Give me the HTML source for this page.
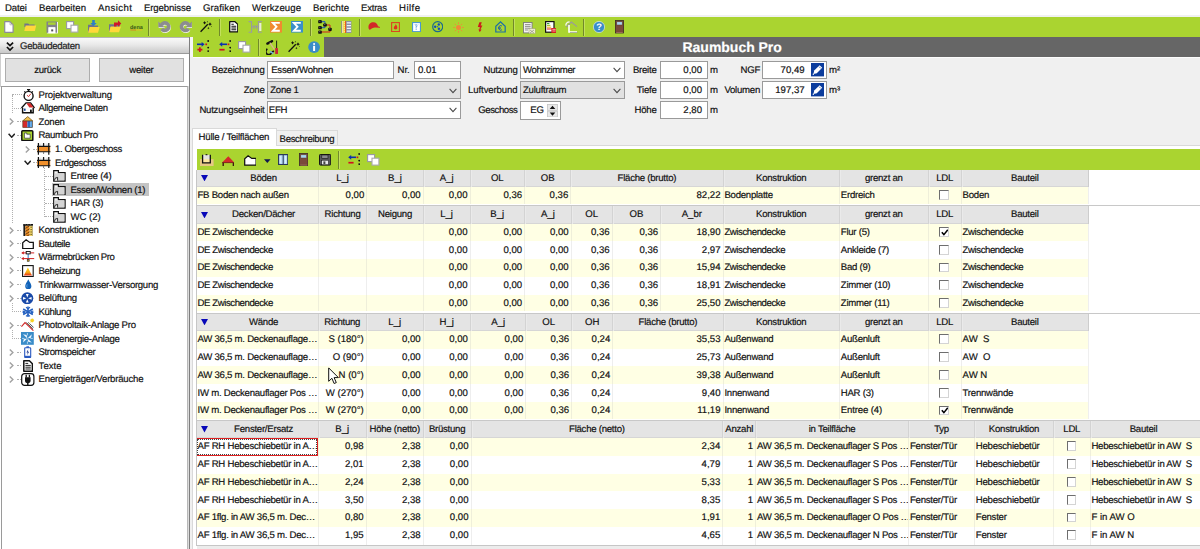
<!DOCTYPE html>
<html lang="de"><head><meta charset="utf-8"><title>Raumbuch Pro</title>
<style>
html,body{margin:0;padding:0}
body{width:1200px;height:549px;overflow:hidden;position:relative;background:#f0f0f0;font-family:"Liberation Sans",sans-serif;font-size:9.6px;color:#111;text-rendering:geometricPrecision}
div,svg{position:absolute;display:block}
.t{white-space:pre;overflow:visible;-webkit-text-stroke-width:0.18px}
</style></head>
<body>
<div style="left:0px;top:0px;width:1200px;height:17px;background:#fff"></div>
<div style="left:0px;top:15.4px;width:1200px;height:1.5px;background:#f1f1f1"></div>
<div class="t" style="left:5px;top:0.8px;height:15.4px;line-height:15.4px;text-align:left;letter-spacing:-0.102px;">Datei</div>
<div class="t" style="left:39px;top:0.8px;height:15.4px;line-height:15.4px;text-align:left;letter-spacing:0.066px;">Bearbeiten</div>
<div class="t" style="left:98px;top:0.8px;height:15.4px;line-height:15.4px;text-align:left;letter-spacing:0.422px;">Ansicht</div>
<div class="t" style="left:144px;top:0.8px;height:15.4px;line-height:15.4px;text-align:left;letter-spacing:-0.111px;">Ergebnisse</div>
<div class="t" style="left:203px;top:0.8px;height:15.4px;line-height:15.4px;text-align:left;letter-spacing:0.105px;">Grafiken</div>
<div class="t" style="left:252px;top:0.8px;height:15.4px;line-height:15.4px;text-align:left;letter-spacing:0.080px;">Werkzeuge</div>
<div class="t" style="left:313px;top:0.8px;height:15.4px;line-height:15.4px;text-align:left;letter-spacing:0.114px;">Berichte</div>
<div class="t" style="left:361px;top:0.8px;height:15.4px;line-height:15.4px;text-align:left;letter-spacing:-0.241px;">Extras</div>
<div class="t" style="left:399px;top:0.8px;height:15.4px;line-height:15.4px;text-align:left;letter-spacing:0.449px;">Hilfe</div>
<div style="left:0px;top:17px;width:1200px;height:20.2px;background:#aad430"></div>
<svg style="left:4px;top:21.2px" width="9.8" height="12" viewBox="0 0 9.8 12"><path d="M0.7 0.7 H6 L9.1 3.8 V11.3 H0.7 Z" fill="#fff" stroke="#8c8c96" stroke-width="1.2" stroke-linejoin="round"/><path d="M6 0.7 V3.8 H9.1" fill="none" stroke="#b0b0b8" stroke-width="0.8"/></svg>
<svg style="left:24.2px;top:22.8px" width="12.4" height="8.6" viewBox="0 0 12.4 8.6"><path d="M0.4 0.4 H4.2 L5.2 1.4 H10.6 V4 H0.4 Z" fill="#70748c"/><path d="M1.6 2.6 H12.2 L10.8 8.3 H0.2 Z" fill="#ffd83a"/></svg>
<svg style="left:46px;top:21.2px" width="12.4" height="12.6" viewBox="0 0 12.4 12.6"><rect x="1" y="1" width="11" height="11.4" fill="#f4f4f4"/><path d="M0.5 0.5 H11 V11.8 H9.4 V6.2 H2.4 V11.8 H0.5 Z" fill="#82828a"/><rect x="2" y="1.4" width="7.6" height="2.4" fill="#aad430"/><rect x="2.6" y="6.4" width="6.6" height="5.6" fill="#fff"/><rect x="5.2" y="8.4" width="2" height="2" fill="#555"/><path d="M2.4 11.9 H9.4" stroke="#fff" stroke-width="0.8"/></svg>
<svg style="left:66px;top:21.2px" width="12.5" height="11.8" viewBox="0 0 12.5 11.8"><rect x="0.6" y="0.6" width="7" height="7" fill="#fff" stroke="#9898a4" stroke-width="1.1"/><rect x="5" y="4.2" width="6.9" height="6.9" fill="#fff" stroke="#a8a8ac" stroke-width="1.1"/></svg>
<svg style="left:88px;top:20px" width="12.2" height="13" viewBox="0 0 12.2 13"><path d="M0 4.7 H4.4 L5.2 5.4 H10 V7.4 H1.2 V12.7 H0 Z" fill="#70748c"/><path d="M1.7 7 H11.7 L10 12.7 H0 Z" fill="#ffd83a"/><path d="M4.2 0 H6.8 V3 H8.7 L5.5 6.3 L2.3 3 H4.2 Z" fill="#2d7fc8"/></svg>
<svg style="left:109px;top:20.4px" width="12.6" height="12.6" viewBox="0 0 12.6 12.6"><path d="M0 4.3 H4.4 L5.2 5 H11 V7 H1.2 V12.3 H0 Z" fill="#70748c"/><path d="M1.7 6.6 H12 L10 12.3 H0 Z" fill="#ffd83a"/><path d="M5 6.6 V2.6 H9 V0.3 L12.3 3.6 L9 6.8 V5.1 H7.5 V6.6 Z" fill="#d01828"/></svg>
<svg style="left:129.6px;top:24px" width="13.4" height="7.4" viewBox="0 0 13.4 7.4"><text x="0" y="5" font-family="Liberation Sans" font-weight="bold" font-size="5.6" fill="#3a5a18" textLength="12.8" lengthAdjust="spacingAndGlyphs">dena</text><path d="M0.4 6 H6" stroke="#e07820" stroke-width="0.9"/><path d="M6 6 H12.4" stroke="#e0c020" stroke-width="0.9"/></svg>
<div style="left:148.1px;top:19px;width:1.1px;height:17px;background:#71892a"></div>
<div style="left:149.2px;top:19px;width:1px;height:17px;background:#c3e05c"></div>
<svg style="left:157.6px;top:21px" width="13.4" height="13" viewBox="0 0 13.4 13"><g transform="translate(0.4 0.7)"><path d="M3.4 4.2 A3.8 3.8 0 1 1 3.8 7.9" fill="none" stroke="#f6f6f6" stroke-width="3.7"/><path d="M0.3 0.5 V6.3 H6.6 Z" fill="#f6f6f6"/></g><path d="M3.4 4.2 A3.8 3.8 0 1 1 3.8 7.9" fill="none" stroke="#8c8c90" stroke-width="3.7"/><path d="M0.3 0.5 V6.3 H6.6 Z" fill="#8c8c90"/></svg>
<svg style="left:178.8px;top:21px" width="13.4" height="13" viewBox="0 0 13.4 13"><g transform="translate(13.2 0) scale(-1 1)"><g transform="translate(-0.4 0.7)"><path d="M3.4 4.2 A3.8 3.8 0 1 1 3.8 7.9" fill="none" stroke="#f6f6f6" stroke-width="3.7"/><path d="M0.3 0.5 V6.3 H6.6 Z" fill="#f6f6f6"/></g><path d="M3.4 4.2 A3.8 3.8 0 1 1 3.8 7.9" fill="none" stroke="#8c8c90" stroke-width="3.7"/><path d="M0.3 0.5 V6.3 H6.6 Z" fill="#8c8c90"/></g></svg>
<svg style="left:200px;top:21px" width="12" height="11.6" viewBox="0 0 12 11.6"><path d="M0.6 10.8 L7.8 3.2" stroke="#111" stroke-width="1.25" fill="none"/><path d="M4.6 0.10000000000000009 L5.194999999999999 1.205 L6.3 1.8 L5.194999999999999 2.395 L4.6 3.5 L4.005 2.395 L2.8999999999999995 1.8 L4.005 1.205 Z" fill="#111"/><path d="M10 1.3000000000000003 L10.665 2.535 L11.9 3.2 L10.665 3.865 L10 5.1 L9.335 3.865 L8.1 3.2 L9.335 2.535 Z" fill="#111"/><path d="M8.4 6.1 L8.785 6.815 L9.5 7.2 L8.785 7.585 L8.4 8.3 L8.015 7.585 L7.300000000000001 7.2 L8.015 6.815 Z" fill="#111"/><circle cx="7.4" cy="0.8" r="0.5" fill="#111"/><circle cx="11.4" cy="5.6" r="0.45" fill="#111"/></svg>
<div style="left:218.7px;top:19px;width:1.1px;height:17px;background:#71892a"></div>
<div style="left:219.8px;top:19px;width:1px;height:17px;background:#c3e05c"></div>
<svg style="left:228.6px;top:21.2px" width="9.6" height="11.6" viewBox="0 0 9.6 11.6"><path d="M0.7 0.7 H6 L8.8 3.4 V10.8 H0.7 Z" fill="#fff" stroke="#111" stroke-width="1.3" stroke-linejoin="round"/><path d="M2.4 3.2 H4.8 M2.4 5.2 H7.2 M2.4 7 H7.2 M2.4 8.8 H7.2" stroke="#111" stroke-width="1.05"/></svg>
<svg style="left:248px;top:21.4px" width="14.4" height="11.8" viewBox="0 0 14.4 11.8"><path d="M0.6 0.6 H3.6 V11.2 H0.6 M13.8 0.6 H10.4 V11.2 H13.8" fill="none" stroke="#9a9aa2" stroke-width="1.1"/><path d="M3.6 5.8 H10.4 M6 4 V7.8 M8.4 4 V7.8" stroke="#9a9aa2" stroke-width="1"/><rect x="11.2" y="2" width="2.2" height="8" fill="#e8ecd8"/></svg>
<svg style="left:270.2px;top:21.2px" width="12" height="11.6" viewBox="0 0 12 11.6"><rect width="12" height="11.6" fill="#f08a30"/><path d="M9.8 1.9 H2.9 L6.5 5.8 L2.9 9.7 H9.8" fill="none" stroke="#fff" stroke-width="1.9" stroke-linejoin="miter"/></svg>
<svg style="left:291.2px;top:21.2px" width="12" height="11.6" viewBox="0 0 12 11.6"><rect width="12" height="11.6" fill="#3a90c8"/><path d="M9.8 1.9 H2.9 L6.5 5.8 L2.9 9.7 H9.8" fill="none" stroke="#fff" stroke-width="1.9" stroke-linejoin="miter"/></svg>
<div style="left:309.9px;top:19px;width:1.1px;height:17px;background:#71892a"></div>
<div style="left:311px;top:19px;width:1px;height:17px;background:#c3e05c"></div>
<svg style="left:318px;top:20px" width="14.4" height="14.2" viewBox="0 0 14.4 14.2"><path d="M2 1.7 H7 V5 M2 7.7 H7 V5" fill="none" stroke="#1a50c0" stroke-width="1"/><path d="M7 5 H12 V9.3 M2 12 H12 V9.3" fill="none" stroke="#d02020" stroke-width="1"/><rect x="0.19999999999999996" y="0.09999999999999987" width="3.6" height="3.2" rx="0.9" fill="#111"/><rect x="1.1" y="0.7999999999999999" width="1.2" height="0.8" fill="#777"/><rect x="0.19999999999999996" y="6.1" width="3.6" height="3.2" rx="0.9" fill="#111"/><rect x="1.1" y="6.8" width="1.2" height="0.8" fill="#777"/><rect x="0.19999999999999996" y="10.6" width="3.6" height="3.2" rx="0.9" fill="#111"/><rect x="1.1" y="11.299999999999999" width="1.2" height="0.8" fill="#777"/><rect x="5.2" y="3.4" width="3.6" height="3.2" rx="0.9" fill="#111"/><rect x="6.1" y="4.1" width="1.2" height="0.8" fill="#777"/><rect x="10.2" y="7.700000000000001" width="3.6" height="3.2" rx="0.9" fill="#111"/><rect x="11.1" y="8.4" width="1.2" height="0.8" fill="#777"/></svg>
<svg style="left:341px;top:21px" width="10.6" height="12" viewBox="0 0 10.6 12"><rect x="0.2" y="0" width="0.9" height="12" fill="#8a8a90"/><rect x="1.1" y="0" width="1.5" height="12" fill="#f4e6a8"/><rect x="2.6" y="0" width="1.5" height="12" fill="#ffd030"/><rect x="4.1" y="0" width="1.1" height="12" fill="#e85020"/><rect x="5.2" y="0" width="5.2" height="12" fill="#8c90a8"/><path d="M5.8 1.8 H10 M5.8 4.6 H10 M5.8 7.4 H10 M5.8 10.2 H10" stroke="#f4f4fa" stroke-width="1.2"/><path d="M3.3 0 V12" stroke="#fff" stroke-width="0.5" stroke-dasharray="1 1"/></svg>
<div style="left:358.7px;top:19px;width:1.1px;height:17px;background:#71892a"></div>
<div style="left:359.8px;top:19px;width:1px;height:17px;background:#c3e05c"></div>
<svg style="left:367.8px;top:22.4px" width="12.4" height="8.2" viewBox="0 0 12.4 8.2"><path d="M0.6 6.4 C-0.2 2.6 2.4 0.2 5.4 0.3 C8 0.4 9.6 2.2 10 4.2 L12.3 5 L12 5.7 L7 5.5 C5.2 5.6 3.2 6.8 1.8 8 Z" fill="#d22828"/></svg>
<svg style="left:390.8px;top:22px" width="9" height="10.2" viewBox="0 0 9 10.2"><rect x="0.6" y="0.6" width="7.8" height="9" fill="none" stroke="#dc4420" stroke-width="1.1"/><path d="M4.6 2 C6.2 3.8 6.6 5.2 6.2 6.6 C5.8 7.8 3.2 7.8 2.8 6.6 C2.5 5.4 3.4 4.8 3.6 3.8 C4.2 4.4 4.4 3 4.6 2 Z" fill="#e03020"/></svg>
<svg style="left:411.8px;top:22px" width="9" height="10.2" viewBox="0 0 9 10.2"><rect x="0.55" y="0.55" width="7.9" height="9.1" fill="#fff" stroke="#4a98d0" stroke-width="1.1"/><path d="M4.2 2 V8.4 M4.2 5.2 L6 2.6 M3 2.4 L4.2 4" stroke="#5a9ad8" stroke-width="0.8" fill="none" stroke-dasharray="1.6 0.6"/></svg>
<svg style="left:432px;top:21.3px" width="11.4" height="11.4" viewBox="0 0 11.4 11.4"><circle cx="5.7" cy="5.7" r="5" fill="none" stroke="#1a6c8c" stroke-width="1.2"/><circle cx="6.8" cy="3.5" r="1.2" fill="#1048c0"/><circle cx="3.2" cy="5.8" r="1.2" fill="#1048c0"/><circle cx="6.9" cy="7.8" r="1.2" fill="#1048c0"/><circle cx="5.6" cy="5.7" r="0.6" fill="#1a6c8c"/></svg>
<svg style="left:453px;top:21.6px" width="11" height="11" viewBox="0 0 11 11"><circle cx="5.5" cy="5.5" r="2.5" fill="#f08838"/><path d="M5.5 0.3 V2 M5.5 9 V10.7 M0.3 5.5 H2 M9 5.5 H10.7 M1.8 1.8 L3 3 M8 8 L9.2 9.2 M9.2 1.8 L8 3 M3 8 L1.8 9.2" stroke="#f08838" stroke-width="0.9"/></svg>
<svg style="left:476.6px;top:22px" width="6.4" height="10.4" viewBox="0 0 6.4 10.4"><path d="M2.4 0.2 H4.8 L3.6 3.4 H5.4 L3.4 7.4 H4.6 L2.8 10.2 L1.4 7.4 H2.4 L2.8 5 H0.8 Z" fill="#cc1c1c"/></svg>
<svg style="left:495.2px;top:21px" width="11" height="11.8" viewBox="0 0 11 11.8"><path d="M0.8 11 V5.2 L5.5 0.9 L10.2 5.2 V11 Z" fill="none" stroke="#1a6ca8" stroke-width="1.2" stroke-linejoin="miter"/><path d="M6.9 5 A2.1 2.3 0 1 0 6.9 8.8" fill="none" stroke="#1a54b0" stroke-width="1"/><path d="M3.4 6.4 H6 M3.4 7.5 H6" stroke="#1a54b0" stroke-width="0.6"/></svg>
<div style="left:512.7px;top:19px;width:1.1px;height:17px;background:#71892a"></div>
<div style="left:513.8px;top:19px;width:1px;height:17px;background:#c3e05c"></div>
<svg style="left:523.2px;top:21.6px" width="12.6" height="12" viewBox="0 0 12.6 12"><rect x="0.5" y="0.5" width="8.6" height="10.4" fill="#f4f4f0" stroke="#7a7a7a" stroke-width="0.9"/><path d="M2 2.6 H7.6 M2 4.4 H7.6 M2 6.2 H7.6 M2 8 H5" stroke="#666" stroke-width="0.7"/><rect x="6" y="6.6" width="6.2" height="5" fill="#f0f0d0" stroke="#9a9a70" stroke-width="0.5"/><path d="M7 8 L11 11 M11 8 L7 11" stroke="#777" stroke-width="0.6"/></svg>
<svg style="left:544.6px;top:21px" width="11.8" height="12.4" viewBox="0 0 11.8 12.4"><rect x="0.6" y="0.6" width="8.4" height="10.6" fill="#fff" stroke="#111" stroke-width="1.2"/><path d="M2 2.6 H4.4" stroke="#28a030" stroke-width="1.1"/><path d="M2 4.4 H5.4" stroke="#a0c828" stroke-width="1.1"/><path d="M2 6.2 H6.2" stroke="#f0b020" stroke-width="1.1"/><path d="M2 8 H7" stroke="#e03020" stroke-width="1.1"/><rect x="6.4" y="7" width="5.2" height="5.2" fill="#d82020"/><path d="M7.4 8.4 H10.6 M7.4 10 H10.6" stroke="#fff" stroke-width="0.6"/></svg>
<svg style="left:565px;top:21.4px" width="13" height="12" viewBox="0 0 13 12"><path d="M1.2 6 L6.4 1 L12 5.6" fill="none" stroke="#9a9a9a" stroke-width="1.2"/><path d="M4 4 V11 H12" fill="none" stroke="#fff" stroke-width="1.6"/><path d="M0.8 4.6 A4 4 0 0 1 4.6 0.8" fill="none" stroke="#f4f4f4" stroke-width="1.3"/><path d="M5 11.6 H12.4" stroke="#8a8a8a" stroke-width="0.7"/></svg>
<div style="left:583.3px;top:19px;width:1.1px;height:17px;background:#71892a"></div>
<div style="left:584.4px;top:19px;width:1px;height:17px;background:#c3e05c"></div>
<svg style="left:592.6px;top:21px" width="12" height="12" viewBox="0 0 12 12"><circle cx="6" cy="6" r="5.6" fill="#3a8cc8" stroke="#e8f0f8" stroke-width="0.6"/><text x="6" y="9.4" text-anchor="middle" font-family="Liberation Sans" font-weight="bold" font-size="9.4" fill="#fff">?</text></svg>
<svg style="left:615.2px;top:20.2px" width="9" height="13.4" viewBox="0 0 9 13.4"><rect x="0.4" y="0.4" width="8.2" height="12.6" fill="#7a4a3a" stroke="#3a2a26" stroke-width="0.8"/><rect x="1.8" y="1.8" width="5.4" height="3.2" fill="#a8d4ee" stroke="#5a3a30" stroke-width="0.5"/><rect x="1.2" y="12.0" width="6.6" height="1" fill="#9a6a58"/></svg>
<div style="left:0px;top:37.2px;width:189.5px;height:512px;background:#fff"></div>
<div style="left:0px;top:37.2px;width:189.5px;height:16.8px;background:linear-gradient(#fafafa,#e9e9e9 45%,#c9c9c9);border-top:1px solid #b5b5b5;border-bottom:1px solid #9a9a9a;box-sizing:border-box"></div>
<div style="left:189px;top:37.2px;width:1.1px;height:512px;background:#7e7e7e"></div>
<div style="left:190.1px;top:37.2px;width:3px;height:20px;background:#f6f6f6"></div>
<div style="left:190.1px;top:57px;width:3px;height:500px;background:#f0f0f0"></div>
<svg style="left:4.6px;top:40.6px" width="10" height="12" viewBox="0 0 10 12"><path d="M1.9 1.6 L5 4.6 L8.1 1.6 M1.9 6 L5 9 L8.1 6" fill="none" stroke="#111" stroke-width="1.7"/></svg>
<div class="t" style="left:20px;top:39.3px;height:16.4px;line-height:16.4px;text-align:left;letter-spacing:-0.317px;color:#222">Gebäudedaten</div>
<div style="left:0px;top:54px;width:1px;height:33px;background:#cfcfcf"></div>
<div style="left:5px;top:58px;width:85.2px;height:23.6px;background:#e1e1e1;border:1px solid #adadad;box-sizing:border-box"></div>
<div class="t" style="left:5px;top:58.8px;height:23.6px;line-height:23.6px;width:85.2px;text-align:center;letter-spacing:-0.25px;">zurück</div>
<div style="left:98.8px;top:58px;width:85.2px;height:23.6px;background:#e1e1e1;border:1px solid #adadad;box-sizing:border-box"></div>
<div class="t" style="left:98.8px;top:58.8px;height:23.6px;line-height:23.6px;width:85.2px;text-align:center;letter-spacing:-0.25px;">weiter</div>
<div style="left:1px;top:86px;width:187.4px;height:470px;background:#fff;border:1px solid #9a9a9a;border-right-color:#b8b8b8;box-sizing:border-box"></div>
<div style="left:188.2px;top:86px;width:0.8px;height:470px;background:#dcdcdc"></div>
<div style="left:11.9px;top:94.7px;width:0px;height:18.553px;border-left:1px dotted #b0b0b0;width:0"></div>
<div style="left:12.3px;top:94.3px;width:9.7px;height:0px;border-top:1px dotted #b0b0b0;height:0"></div>
<div style="left:12.3px;top:107.853px;width:8.7px;height:0px;border-top:1px dotted #b0b0b0;height:0"></div>
<div style="left:11.9px;top:139.359px;width:0px;height:83.318px;border-left:1px dotted #b0b0b0;width:0"></div>
<div style="left:11.9px;top:302.995px;width:0px;height:8.553px;border-left:1px dotted #b0b0b0;width:0"></div>
<div style="left:12.3px;top:311.148px;width:8.7px;height:0px;border-top:1px dotted #b0b0b0;height:0"></div>
<div style="left:11.9px;top:330.101px;width:0px;height:8.553px;border-left:1px dotted #b0b0b0;width:0"></div>
<div style="left:12.3px;top:338.254px;width:8.7px;height:0px;border-top:1px dotted #b0b0b0;height:0"></div>
<div style="left:44.2px;top:168.465px;width:0px;height:48.712px;border-left:1px dotted #b0b0b0;width:0"></div>
<div style="left:44.6px;top:175.618px;width:8.4px;height:0px;border-top:1px dotted #b0b0b0;height:0"></div>
<div style="left:44.6px;top:189.171px;width:8.4px;height:0px;border-top:1px dotted #b0b0b0;height:0"></div>
<div style="left:44.6px;top:202.724px;width:8.4px;height:0px;border-top:1px dotted #b0b0b0;height:0"></div>
<div style="left:44.6px;top:216.277px;width:8.4px;height:0px;border-top:1px dotted #b0b0b0;height:0"></div>
<div style="left:17px;top:121.406px;width:4px;height:0px;border-top:1px dotted #b0b0b0;height:0"></div>
<div style="left:17px;top:134.959px;width:4px;height:0px;border-top:1px dotted #b0b0b0;height:0"></div>
<div style="left:17px;top:229.83px;width:4px;height:0px;border-top:1px dotted #b0b0b0;height:0"></div>
<div style="left:17px;top:243.383px;width:4px;height:0px;border-top:1px dotted #b0b0b0;height:0"></div>
<div style="left:17px;top:256.936px;width:4px;height:0px;border-top:1px dotted #b0b0b0;height:0"></div>
<div style="left:17px;top:270.489px;width:4px;height:0px;border-top:1px dotted #b0b0b0;height:0"></div>
<div style="left:17px;top:284.042px;width:4px;height:0px;border-top:1px dotted #b0b0b0;height:0"></div>
<div style="left:17px;top:297.595px;width:4px;height:0px;border-top:1px dotted #b0b0b0;height:0"></div>
<div style="left:17px;top:324.701px;width:4px;height:0px;border-top:1px dotted #b0b0b0;height:0"></div>
<div style="left:17px;top:351.807px;width:4px;height:0px;border-top:1px dotted #b0b0b0;height:0"></div>
<div style="left:17px;top:365.36px;width:4px;height:0px;border-top:1px dotted #b0b0b0;height:0"></div>
<div style="left:17px;top:378.913px;width:4px;height:0px;border-top:1px dotted #b0b0b0;height:0"></div>
<div style="left:33px;top:148.512px;width:4px;height:0px;border-top:1px dotted #b0b0b0;height:0"></div>
<div style="left:33px;top:162.065px;width:4px;height:0px;border-top:1px dotted #b0b0b0;height:0"></div>
<div style="left:51.6px;top:182.671px;width:97.6px;height:13.3px;background:#c4c4c4"></div>
<div class="t" style="left:38.6px;top:88.8px;height:14px;line-height:14px;text-align:left;letter-spacing:-0.179px;">Projektverwaltung</div>
<div class="t" style="left:38.6px;top:102.353px;height:14px;line-height:14px;text-align:left;letter-spacing:-0.420px;">Allgemeine Daten</div>
<svg style="left:9px;top:118.406px" width="5" height="7" viewBox="0 0 5 7"><path d="M0.8 0.5 L3.9 3.5 L0.8 6.5" fill="none" stroke="#a2a2a2" stroke-width="1.4"/></svg>
<div class="t" style="left:38.6px;top:115.906px;height:14px;line-height:14px;text-align:left;letter-spacing:-0.25px;">Zonen</div>
<svg style="left:7.8px;top:132.759px" width="7.4" height="5.4" viewBox="0 0 7.4 5.4"><path d="M0.6 0.8 L3.7 4.2 L6.8 0.8" fill="none" stroke="#222" stroke-width="1.5"/></svg>
<div class="t" style="left:38.6px;top:129.459px;height:14px;line-height:14px;text-align:left;letter-spacing:-0.420px;">Raumbuch Pro</div>
<svg style="left:25.2px;top:145.512px" width="5" height="7" viewBox="0 0 5 7"><path d="M0.8 0.5 L3.9 3.5 L0.8 6.5" fill="none" stroke="#a2a2a2" stroke-width="1.4"/></svg>
<div class="t" style="left:55px;top:143.012px;height:14px;line-height:14px;text-align:left;letter-spacing:-0.381px;">1. Obergeschoss</div>
<svg style="left:24px;top:159.865px" width="7.4" height="5.4" viewBox="0 0 7.4 5.4"><path d="M0.6 0.8 L3.7 4.2 L6.8 0.8" fill="none" stroke="#222" stroke-width="1.5"/></svg>
<div class="t" style="left:55px;top:156.565px;height:14px;line-height:14px;text-align:left;letter-spacing:-0.420px;">Erdgeschoss</div>
<div class="t" style="left:70.4px;top:170.118px;height:14px;line-height:14px;text-align:left;letter-spacing:-0.152px;">Entree (4)</div>
<div class="t" style="left:70.4px;top:183.671px;height:14px;line-height:14px;text-align:left;letter-spacing:-0.279px;">Essen/Wohnen (1)</div>
<div class="t" style="left:70.4px;top:197.224px;height:14px;line-height:14px;text-align:left;letter-spacing:-0.25px;">HAR (3)</div>
<div class="t" style="left:70.4px;top:210.777px;height:14px;line-height:14px;text-align:left;">WC (2)</div>
<svg style="left:9px;top:226.83px" width="5" height="7" viewBox="0 0 5 7"><path d="M0.8 0.5 L3.9 3.5 L0.8 6.5" fill="none" stroke="#a2a2a2" stroke-width="1.4"/></svg>
<div class="t" style="left:38.6px;top:224.33px;height:14px;line-height:14px;text-align:left;letter-spacing:-0.292px;">Konstruktionen</div>
<svg style="left:9px;top:240.383px" width="5" height="7" viewBox="0 0 5 7"><path d="M0.8 0.5 L3.9 3.5 L0.8 6.5" fill="none" stroke="#a2a2a2" stroke-width="1.4"/></svg>
<div class="t" style="left:38.6px;top:237.883px;height:14px;line-height:14px;text-align:left;letter-spacing:-0.420px;">Bauteile</div>
<svg style="left:9px;top:253.936px" width="5" height="7" viewBox="0 0 5 7"><path d="M0.8 0.5 L3.9 3.5 L0.8 6.5" fill="none" stroke="#a2a2a2" stroke-width="1.4"/></svg>
<div class="t" style="left:38.6px;top:251.436px;height:14px;line-height:14px;text-align:left;letter-spacing:-0.420px;">Wärmebrücken Pro</div>
<svg style="left:9px;top:267.489px" width="5" height="7" viewBox="0 0 5 7"><path d="M0.8 0.5 L3.9 3.5 L0.8 6.5" fill="none" stroke="#a2a2a2" stroke-width="1.4"/></svg>
<div class="t" style="left:38.6px;top:264.989px;height:14px;line-height:14px;text-align:left;letter-spacing:-0.420px;">Beheizung</div>
<svg style="left:9px;top:281.042px" width="5" height="7" viewBox="0 0 5 7"><path d="M0.8 0.5 L3.9 3.5 L0.8 6.5" fill="none" stroke="#a2a2a2" stroke-width="1.4"/></svg>
<div class="t" style="left:38.6px;top:278.542px;height:14px;line-height:14px;text-align:left;letter-spacing:-0.295px;">Trinkwarmwasser-Versorgung</div>
<svg style="left:9px;top:294.595px" width="5" height="7" viewBox="0 0 5 7"><path d="M0.8 0.5 L3.9 3.5 L0.8 6.5" fill="none" stroke="#a2a2a2" stroke-width="1.4"/></svg>
<div class="t" style="left:38.6px;top:292.095px;height:14px;line-height:14px;text-align:left;letter-spacing:-0.25px;">Belüftung</div>
<div class="t" style="left:38.6px;top:305.648px;height:14px;line-height:14px;text-align:left;letter-spacing:-0.420px;">Kühlung</div>
<svg style="left:9px;top:321.701px" width="5" height="7" viewBox="0 0 5 7"><path d="M0.8 0.5 L3.9 3.5 L0.8 6.5" fill="none" stroke="#a2a2a2" stroke-width="1.4"/></svg>
<div class="t" style="left:38.6px;top:319.201px;height:14px;line-height:14px;text-align:left;letter-spacing:-0.25px;">Photovoltaik-Anlage Pro</div>
<div class="t" style="left:38.6px;top:332.754px;height:14px;line-height:14px;text-align:left;letter-spacing:-0.332px;">Windenergie-Anlage</div>
<svg style="left:9px;top:348.807px" width="5" height="7" viewBox="0 0 5 7"><path d="M0.8 0.5 L3.9 3.5 L0.8 6.5" fill="none" stroke="#a2a2a2" stroke-width="1.4"/></svg>
<div class="t" style="left:38.6px;top:346.307px;height:14px;line-height:14px;text-align:left;letter-spacing:-0.405px;">Stromspeicher</div>
<svg style="left:9px;top:362.36px" width="5" height="7" viewBox="0 0 5 7"><path d="M0.8 0.5 L3.9 3.5 L0.8 6.5" fill="none" stroke="#a2a2a2" stroke-width="1.4"/></svg>
<div class="t" style="left:38.6px;top:359.86px;height:14px;line-height:14px;text-align:left;letter-spacing:0.016px;">Texte</div>
<svg style="left:9px;top:375.913px" width="5" height="7" viewBox="0 0 5 7"><path d="M0.8 0.5 L3.9 3.5 L0.8 6.5" fill="none" stroke="#a2a2a2" stroke-width="1.4"/></svg>
<div class="t" style="left:38.6px;top:373.413px;height:14px;line-height:14px;text-align:left;letter-spacing:-0.216px;">Energieträger/Verbräuche</div>
<svg style="left:22.6px;top:88.5px" width="11.2" height="12.2" viewBox="0 0 11.2 12.2"><circle cx="5.6" cy="6.9" r="4.5" fill="#fff" stroke="#111" stroke-width="1.4"/><path d="M4 0.7 H7.2 M5.6 0.7 V2.2 M1.4 2.4 L2.6 3.6 M9.8 2.4 L8.6 3.6" stroke="#111" stroke-width="1.3"/><path d="M4 6.2 L5.6 7.6 L7.8 4.8" fill="none" stroke="#d02020" stroke-width="0.9"/></svg>
<svg style="left:20.8px;top:102.453px" width="14" height="11.6" viewBox="0 0 14 11.6"><path d="M1.6 5.6 V10.8 H12.2 V5.6" fill="#fff" stroke="#111" stroke-width="1.45"/><path d="M0.5 6 L5 0.9 H9.6 L13.5 6" fill="#fff" stroke="#111" stroke-width="1.4" stroke-linejoin="round"/><path d="M5.4 1.2 H9.4 L12.6 5.4 H8.4 Z" fill="#d42a2a"/><rect x="3" y="6.6" width="1.6" height="2.2" fill="#1a4a9c"/><rect x="9" y="7.6" width="1.8" height="3.2" fill="#111"/></svg>
<svg style="left:22px;top:115.806px" width="11.4" height="12" viewBox="0 0 11.4 12"><path d="M0.6 5 L5.7 0.6 L10.8 5 Z" fill="#f0c050" stroke="#7a5a20" stroke-width="0.8" stroke-linejoin="round"/><rect x="0.8" y="5" width="4.6" height="6.6" fill="#d42a2a"/><rect x="5.4" y="5" width="2.8" height="6.6" fill="#2a6ac0"/><rect x="8.2" y="5" width="2.4" height="6.6" fill="#58a0e0"/><rect x="0.8" y="5" width="9.8" height="6.6" fill="none" stroke="#5a3a20" stroke-width="0.6"/></svg>
<svg style="left:21.4px;top:129.559px" width="12.6" height="11.4" viewBox="0 0 12.6 11.4"><rect x="0.8" y="0.8" width="11" height="9.8" rx="0.8" fill="#aad430" stroke="#111" stroke-width="1.5"/><path d="M3.4 8.2 V3 H5.8 V4.2 H9.2 V8.2 Z" fill="#fff" stroke="#333" stroke-width="0.7"/></svg>
<svg style="left:37.3px;top:143.312px" width="13.4" height="11.8" viewBox="0 0 13.4 11.8"><rect x="1.2" y="0.6" width="10.8" height="3" fill="#e4e4e4"/><path d="M4.6 0.4 V3.4 M8.6 0.4 V3.4" stroke="#f8f8f8" stroke-width="1"/><rect x="0.2" y="3.4" width="13" height="5.4" fill="#f0902c"/><path d="M0 3.4 H13.4 M0 8.8 H13.4" stroke="#111" stroke-width="1.1"/><path d="M6.6 0 V3.4" stroke="#111" stroke-width="1.1"/><path d="M1.4 0 V11.8 M11.8 0 V11.8" stroke="#111" stroke-width="1.2"/><path d="M6.6 8.8 V11" stroke="#555" stroke-width="0.8"/></svg>
<svg style="left:37.3px;top:156.565px" width="13.4" height="11.8" viewBox="0 0 13.4 11.8"><rect x="1.2" y="0.6" width="10.8" height="3" fill="#e4e4e4"/><path d="M4.6 0.4 V3.4 M8.6 0.4 V3.4" stroke="#f8f8f8" stroke-width="1"/><rect x="0.2" y="3.4" width="13" height="5.4" fill="#f0902c"/><path d="M0 3.4 H13.4 M0 8.8 H13.4" stroke="#111" stroke-width="1.1"/><path d="M6.6 0 V3.4" stroke="#111" stroke-width="1.1"/><path d="M1.4 0 V11.8 M11.8 0 V11.8" stroke="#111" stroke-width="1.2"/><path d="M6.6 8.8 V11" stroke="#555" stroke-width="0.8"/></svg>
<svg style="left:53.2px;top:170.118px" width="12.8" height="11.8" viewBox="0 0 12.8 11.8"><path d="M0.7 11.1 V0.7 H5.4 V2.6 H12.1 V11.1 Z" fill="#f4f4f4" stroke="#111" stroke-width="1.2" stroke-linejoin="miter"/><rect x="1.6" y="3.4" width="9.6" height="6.8" fill="#d4d4d4"/><path d="M1.4 10.6 A3.2 3.2 0 0 1 4.6 7.4 V10.6" fill="#f0f0f0" stroke="#111" stroke-width="0.9"/></svg>
<svg style="left:53.2px;top:183.671px" width="12.8" height="11.8" viewBox="0 0 12.8 11.8"><path d="M0.7 11.1 V0.7 H5.4 V2.6 H12.1 V11.1 Z" fill="#f4f4f4" stroke="#111" stroke-width="1.2" stroke-linejoin="miter"/><rect x="1.6" y="3.4" width="9.6" height="6.8" fill="#d4d4d4"/><path d="M1.4 10.6 A3.2 3.2 0 0 1 4.6 7.4 V10.6" fill="#f0f0f0" stroke="#111" stroke-width="0.9"/></svg>
<svg style="left:53.2px;top:197.224px" width="12.8" height="11.8" viewBox="0 0 12.8 11.8"><path d="M0.7 11.1 V0.7 H5.4 V2.6 H12.1 V11.1 Z" fill="#f4f4f4" stroke="#111" stroke-width="1.2" stroke-linejoin="miter"/><rect x="1.6" y="3.4" width="9.6" height="6.8" fill="#d4d4d4"/><path d="M1.4 10.6 A3.2 3.2 0 0 1 4.6 7.4 V10.6" fill="#f0f0f0" stroke="#111" stroke-width="0.9"/></svg>
<svg style="left:53.2px;top:210.777px" width="12.8" height="11.8" viewBox="0 0 12.8 11.8"><path d="M0.7 11.1 V0.7 H5.4 V2.6 H12.1 V11.1 Z" fill="#f4f4f4" stroke="#111" stroke-width="1.2" stroke-linejoin="miter"/><rect x="1.6" y="3.4" width="9.6" height="6.8" fill="#d4d4d4"/><path d="M1.4 10.6 A3.2 3.2 0 0 1 4.6 7.4 V10.6" fill="#f0f0f0" stroke="#111" stroke-width="0.9"/></svg>
<svg style="left:22.6px;top:224.03px" width="10.4" height="12.4" viewBox="0 0 10.4 12.4"><rect x="0.4" y="0.4" width="2" height="12" fill="#1a1a1a"/><rect x="2.4" y="1.6" width="4.2" height="10.8" fill="#e88a22"/><rect x="6.6" y="1.6" width="3.2" height="10.8" fill="#f0d468"/><path d="M2.4 4.4 L6.6 1.8 M2.4 7.4 L6.6 4.8 M2.4 10.4 L6.6 7.8 M3.4 12.4 L6.6 10.6" stroke="#5a3008" stroke-width="0.8"/><path d="M7.4 3.2 H9 M7.4 5.6 H9 M7.4 8 H9 M7.4 10.4 H9" stroke="#6a5a20" stroke-width="0.9"/><rect x="0.4" y="0" width="9.6" height="1.7" fill="#111"/><path d="M1.6 0.5 H9.4" stroke="#999" stroke-width="0.5" stroke-dasharray="1.2 1.4"/><rect x="9.6" y="1.6" width="0.5" height="10.8" fill="#777"/></svg>
<svg style="left:22.2px;top:238.783px" width="12" height="10.4" viewBox="0 0 12 10.4"><path d="M0.7 9.700000000000001 V3.8 L4.1 0.8 L7.8 3.4 H11.3 V9.700000000000001 Z" fill="#fff" stroke="#111" stroke-width="1.25" stroke-linejoin="miter"/></svg>
<svg style="left:21.2px;top:250.336px" width="13.6" height="12.6" viewBox="0 0 13.6 12.6"><path d="M7.2 3.4 V10" stroke="#4a90d8" stroke-width="1.2"/><path d="M1.2 2.9 H13.2" stroke="#d02020" stroke-width="1"/><path d="M0.2 2.9 L2.8 1.2 V4.6 Z" fill="#d02020"/><path d="M1.2 8.6 H13.2" stroke="#d02020" stroke-width="1"/><path d="M0.2 8.6 L2.8 6.9 V10.3 Z" fill="#d02020"/><rect x="5.2" y="1.5" width="4" height="2.4" fill="#fff" stroke="#111" stroke-width="0.9"/><rect x="6.2" y="9.6" width="2" height="1.8" fill="#b89020" stroke="#222" stroke-width="0.5"/></svg>
<svg style="left:22.2px;top:264.689px" width="11.8" height="12.2" viewBox="0 0 11.8 12.2"><defs><linearGradient id="fl" x1="0" y1="0" x2="0" y2="1"><stop offset="0" stop-color="#ffe020"/><stop offset="0.6" stop-color="#f8a818"/><stop offset="1" stop-color="#e02810"/></linearGradient></defs><rect x="0.6" y="0.6" width="10.6" height="11" fill="#fff" stroke="#111" stroke-width="1.1"/><path d="M5.9 2.4 L10 10.6 H1.8 Z" fill="url(#fl)"/></svg>
<svg style="left:25.2px;top:278.842px" width="6.6" height="10.6" viewBox="0 0 6.6 10.6"><path d="M3.3 0.2 C4.8 3.4 6.4 5 6.4 7.2 A3.1 3.1 0 0 1 0.2 7.2 C0.2 5 1.8 3.4 3.3 0.2 Z" fill="#1262b8"/><path d="M2.2 5.4 C1.6 6.6 1.6 7.6 2.2 8.4" stroke="#78b8f0" stroke-width="0.8" fill="none"/></svg>
<svg style="left:21.2px;top:291.695px" width="12.6" height="12.6" viewBox="0 0 12.6 12.6"><circle cx="6.3" cy="6.3" r="6" fill="#1a4aa8"/><path d="M6.3 5.4 L4.9 2 H7.7 Z M6.3 7.2 L4.9 10.6 H7.7 Z M5.4 6.3 L2 4.9 V7.7 Z M7.2 6.3 L10.6 4.9 V7.7 Z" fill="#fff"/></svg>
<svg style="left:21.8px;top:305.748px" width="12" height="11.6" viewBox="0 0 12 11.6"><path d="M6 0.4 V11.2 M1.2 3 L10.8 8.6 M10.8 3 L1.2 8.6" stroke="#2460c0" stroke-width="1.5"/><path d="M4 1.2 L6 3 L8 1.2 M4 10.4 L6 8.6 L8 10.4 M0.6 5 L3 5.8 L1.4 7.8 M11.4 5 L9 5.8 L10.6 7.8 M0.6 6.6 L3 5.8 M11.4 6.6 L9 5.8" stroke="#2460c0" stroke-width="1.1" fill="none"/></svg>
<svg style="left:21.2px;top:317.901px" width="13.6" height="13.2" viewBox="0 0 13.6 13.2"><path d="M0.4 8.6 L4 4.6 L12.4 12.6" fill="none" stroke="#d02a2a" stroke-width="1.2"/><path d="M5.4 4.6 L12 10.8 M7.2 4.4 L12.6 9.4" stroke="#444" stroke-width="0.9"/><circle cx="11.2" cy="2.6" r="1.8" fill="#f8d020"/><path d="M11.2 0 V0.6 M13.4 2.6 H13.6 M8.8 1.4 L9.4 1.8 M13 0.8 L12.6 1.2 M9.2 4.4 L9.8 4 M8.4 5.6 L9 5" stroke="#f8d020" stroke-width="0.8"/></svg>
<svg style="left:21.2px;top:332.254px" width="12.8" height="12.8" viewBox="0 0 12.8 12.8"><rect width="12.8" height="12.8" fill="#3a8cc8"/><path d="M6.4 6.4 L2 2.2 L5.6 3 Z M6.4 6.4 L10.8 2.2 L10 5.8 Z M6.4 6.4 L10.8 10.6 L7.2 9.8 Z M6.4 6.4 L2 10.6 L2.8 7 Z" fill="#eef6ff"/><path d="M6.4 1 V3.4 M6.4 9.4 V11.8 M1 6.4 H3.4 M9.4 6.4 H11.8" stroke="#c0dcf4" stroke-width="0.9"/></svg>
<svg style="left:24.2px;top:345.807px" width="7.4" height="12.4" viewBox="0 0 7.4 12.4"><rect x="0.7" y="1.8" width="6" height="9.8" rx="0.8" fill="#fff" stroke="#2a5ac0" stroke-width="1.1"/><rect x="2.4" y="0.3" width="2.6" height="1.5" fill="#2a5ac0"/><rect x="0.7" y="9.8" width="6" height="1.8" fill="#2a5ac0"/><path d="M4.3 3.2 L2.4 6.6 H3.8 L3.1 9.2 L5.1 5.8 H3.8 Z" fill="#16308a"/></svg>
<svg style="left:22.8px;top:359.76px" width="10.2" height="12" viewBox="0 0 10.2 12"><path d="M0.8 0.8 H6.4 L9.4 3.8 V11.2 H0.8 Z" fill="#fff" stroke="#111" stroke-width="1.5" stroke-linejoin="round"/><path d="M2.4 3.4 H5.2 M2.4 5.4 H7.8 M2.4 7.2 H7.8 M2.4 9 H7.8" stroke="#222" stroke-width="1"/></svg>
<svg style="left:21.2px;top:372.513px" width="13.6" height="13.2" viewBox="0 0 13.6 13.2"><rect x="0.7" y="0.7" width="12.2" height="11.6" rx="2.8" fill="#fff" stroke="#111" stroke-width="1.2"/><path d="M4 4.2 H9.6 V7.4 A2.8 2.8 0 0 1 4 7.4 Z" fill="#111"/><path d="M5.2 1.8 V4.4 M8.4 1.8 V4.4" stroke="#111" stroke-width="1.3"/><path d="M6.8 9.6 V12.6" stroke="#111" stroke-width="1.4"/></svg>
<div style="left:193px;top:37.2px;width:1007px;height:512px;background:#f0f0f0"></div>
<div style="left:192.5px;top:37.2px;width:131.7px;height:19.8px;background:#aad430"></div>
<div style="left:324.2px;top:37.2px;width:876px;height:19.6px;background:#666"></div>
<div style="left:192.5px;top:57px;width:1008px;height:1.2px;background:#fcfcfc"></div>
<div class="t" style="left:682.5px;top:38.2px;height:19.6px;line-height:19.6px;text-align:left;letter-spacing:-0.420px;color:#fff;font-weight:bold;font-size:14px;letter-spacing:-0.02px">Raumbuch Pro</div>
<svg style="left:197.4px;top:40.2px" width="12.6" height="12.4" viewBox="0 0 12.6 12.4"><path d="M0 4.3 H5.2" stroke="#0a2fb0" stroke-width="1.6"/><path d="M4.6 1.9 L7.6 4.3 L4.6 6.7 Z" fill="#0a2fb0"/><rect x="8.4" y="3.5" width="1.7" height="1.7" fill="#d01020"/><path d="M0.4 9.7 H5.4 M2.9 7.3 V12.1" stroke="#d01020" stroke-width="1.7"/><circle cx="11.2" cy="1" r="0.95" fill="#111"/><circle cx="11.2" cy="7.6" r="0.95" fill="#111"/><circle cx="11.2" cy="11.1" r="0.95" fill="#111"/></svg>
<svg style="left:218.6px;top:40.2px" width="12.6" height="12.4" viewBox="0 0 12.6 12.4"><path d="M2.6 4.3 H8" stroke="#0a2fb0" stroke-width="1.6"/><path d="M3.2 1.9 L0.2 4.3 L3.2 6.7 Z" fill="#0a2fb0"/><rect x="8.6" y="3.5" width="1.7" height="1.7" fill="#d01020"/><path d="M0.4 9.7 H5.6" stroke="#d01020" stroke-width="1.7"/><circle cx="11.2" cy="1" r="0.95" fill="#111"/><circle cx="11.2" cy="7.6" r="0.95" fill="#111"/><circle cx="11.2" cy="11.1" r="0.95" fill="#111"/></svg>
<svg style="left:238.2px;top:41.4px" width="12.5" height="11.8" viewBox="0 0 12.5 11.8"><rect x="0.6" y="0.6" width="7" height="7" fill="#fff" stroke="#9898a4" stroke-width="1.1"/><rect x="5" y="4.2" width="6.9" height="6.9" fill="#fff" stroke="#a8a8ac" stroke-width="1.1"/></svg>
<div style="left:257.5px;top:39px;width:1.1px;height:17px;background:#71892a"></div>
<div style="left:258.6px;top:39px;width:1px;height:17px;background:#c3e05c"></div>
<svg style="left:266px;top:40px" width="13.6" height="14.6" viewBox="0 0 13.6 14.6"><path d="M1.4 3.6 L6 1.2" stroke="#111" stroke-width="2.4" stroke-linecap="round"/><path d="M3.8 2.6 L8.4 9.4" stroke="#d8b890" stroke-width="1.2"/><path d="M10.6 0.6 V8.4" stroke="#111" stroke-width="0.9"/><rect x="9.2" y="8" width="2.8" height="6" rx="0.6" fill="#c82838"/><path d="M1.4 9 A3 3 0 1 0 5.6 12.8 L7.8 10.8" fill="none" stroke="#111" stroke-width="1.6"/><path d="M4 11.4 L7.4 13.6" stroke="#78b0e0" stroke-width="1.6"/></svg>
<svg style="left:288px;top:41.4px" width="12" height="11.6" viewBox="0 0 12 11.6"><path d="M0.6 10.8 L7.8 3.2" stroke="#111" stroke-width="1.25" fill="none"/><path d="M4.6 0.10000000000000009 L5.194999999999999 1.205 L6.3 1.8 L5.194999999999999 2.395 L4.6 3.5 L4.005 2.395 L2.8999999999999995 1.8 L4.005 1.205 Z" fill="#111"/><path d="M10 1.3000000000000003 L10.665 2.535 L11.9 3.2 L10.665 3.865 L10 5.1 L9.335 3.865 L8.1 3.2 L9.335 2.535 Z" fill="#111"/><path d="M8.4 6.1 L8.785 6.815 L9.5 7.2 L8.785 7.585 L8.4 8.3 L8.015 7.585 L7.300000000000001 7.2 L8.015 6.815 Z" fill="#111"/><circle cx="7.4" cy="0.8" r="0.5" fill="#111"/><circle cx="11.4" cy="5.6" r="0.45" fill="#111"/></svg>
<svg style="left:308px;top:41.2px" width="12.2" height="12.2" viewBox="0 0 12.2 12.2"><circle cx="6.1" cy="6.1" r="5.9" fill="#3a8cc8"/><circle cx="6.1" cy="3" r="1.05" fill="#fff"/><rect x="5.1" y="4.8" width="2" height="5.2" fill="#fff"/></svg>
<div class="t" style="left:144.5px;top:62.7px;height:16px;line-height:16px;width:120px;text-align:right;letter-spacing:-0.25px;">Bezeichnung</div>
<div style="left:267.2px;top:61.2px;width:126.8px;height:17.4px;background:#fff;border:1px solid #9a9a9a;box-sizing:border-box"></div>
<div class="t" style="left:271.2px;top:62px;height:17.4px;line-height:17.4px;text-align:left;letter-spacing:-0.25px;">Essen/Wohnen</div>
<div class="t" style="left:397.5px;top:62px;height:17.4px;line-height:17.4px;text-align:left;">Nr.</div>
<div style="left:414px;top:61.2px;width:47px;height:17.4px;background:#fff;border:1px solid #9a9a9a;box-sizing:border-box"></div>
<div class="t" style="left:418px;top:62px;height:17.4px;line-height:17.4px;text-align:left;">0.01</div>
<div class="t" style="left:144.5px;top:82.9px;height:16px;line-height:16px;width:120px;text-align:right;letter-spacing:-0.25px;">Zone</div>
<div style="left:267.2px;top:81.4px;width:193.8px;height:17.4px;background:#e1e1e1;border:1px solid #9a9a9a;box-sizing:border-box"></div>
<div class="t" style="left:270.2px;top:82.2px;height:17.4px;line-height:17.4px;text-align:left;letter-spacing:-0.25px;">Zone 1</div>
<svg style="left:449.4px;top:87.5px" width="8" height="6" viewBox="0 0 8 6"><path d="M0.6 0.8 L4 4.6 L7.4 0.8" fill="none" stroke="#484848" stroke-width="1.05"/></svg>
<div class="t" style="left:144.5px;top:103.1px;height:16px;line-height:16px;width:120px;text-align:right;letter-spacing:-0.25px;">Nutzungseinheit</div>
<div style="left:267.2px;top:100.8px;width:193.8px;height:18.3px;background:#fff;border:1px solid #9a9a9a;box-sizing:border-box"></div>
<div class="t" style="left:268.8px;top:101.6px;height:18.3px;line-height:18.3px;text-align:left;letter-spacing:-0.25px;">EFH</div>
<svg style="left:449.4px;top:107.35px" width="8" height="6" viewBox="0 0 8 6"><path d="M0.6 0.8 L4 4.6 L7.4 0.8" fill="none" stroke="#484848" stroke-width="1.05"/></svg>
<div class="t" style="left:397.5px;top:62.7px;height:16px;line-height:16px;width:120px;text-align:right;letter-spacing:-0.25px;">Nutzung</div>
<div style="left:520px;top:61.2px;width:104.6px;height:17.4px;background:#fff;border:1px solid #9a9a9a;box-sizing:border-box"></div>
<div class="t" style="left:523px;top:62px;height:17.4px;line-height:17.4px;text-align:left;letter-spacing:-0.420px;">Wohnzimmer</div>
<svg style="left:613px;top:67.3px" width="8" height="6" viewBox="0 0 8 6"><path d="M0.6 0.8 L4 4.6 L7.4 0.8" fill="none" stroke="#484848" stroke-width="1.05"/></svg>
<div class="t" style="left:397.5px;top:82.9px;height:16px;line-height:16px;width:120px;text-align:right;letter-spacing:-0.117px;">Luftverbund</div>
<div style="left:520px;top:81.4px;width:104.6px;height:17.4px;background:#e1e1e1;border:1px solid #9a9a9a;box-sizing:border-box"></div>
<div class="t" style="left:523px;top:82.2px;height:17.4px;line-height:17.4px;text-align:left;letter-spacing:-0.25px;">Zuluftraum</div>
<svg style="left:613px;top:87.5px" width="8" height="6" viewBox="0 0 8 6"><path d="M0.6 0.8 L4 4.6 L7.4 0.8" fill="none" stroke="#484848" stroke-width="1.05"/></svg>
<div class="t" style="left:397.5px;top:103.1px;height:16px;line-height:16px;width:120px;text-align:right;letter-spacing:-0.420px;">Geschoss</div>
<div style="left:520px;top:100.8px;width:40.8px;height:19.2px;background:#fff;border:1px solid #9a9a9a;box-sizing:border-box"></div>
<div class="t" style="left:520px;top:102.4px;height:17.4px;line-height:17.4px;width:24px;text-align:right;">EG</div>
<svg style="left:546.5px;top:103.8px" width="11" height="13.6" viewBox="0 0 11 13.6"><rect x="0.5" y="0.5" width="10" height="5.8" fill="#e8e8e8" stroke="#c4c4c4" stroke-width="0.8"/><rect x="0.5" y="7.2" width="10" height="5.8" fill="#e8e8e8" stroke="#c4c4c4" stroke-width="0.8"/><path d="M2.7 5 L5.5 1.8 L8.3 5 Z M2.7 8.6 L5.5 11.8 L8.3 8.6 Z" fill="#111"/></svg>
<div class="t" style="left:536.5px;top:62.7px;height:16px;line-height:16px;width:120px;text-align:right;letter-spacing:-0.25px;">Breite</div>
<div style="left:659.5px;top:61.2px;width:48.3px;height:17.4px;background:#fff;border:1px solid #9a9a9a;box-sizing:border-box"></div>
<div class="t" style="left:659.5px;top:62px;height:17.4px;line-height:17.4px;width:42.5px;text-align:right;">0,00</div>
<div class="t" style="left:710px;top:62px;height:17.4px;line-height:17.4px;text-align:left;">m</div>
<div class="t" style="left:536.5px;top:82.9px;height:16px;line-height:16px;width:120px;text-align:right;letter-spacing:-0.25px;">Tiefe</div>
<div style="left:659.5px;top:81.4px;width:48.3px;height:17.4px;background:#fff;border:1px solid #9a9a9a;box-sizing:border-box"></div>
<div class="t" style="left:659.5px;top:82.2px;height:17.4px;line-height:17.4px;width:42.5px;text-align:right;">0,00</div>
<div class="t" style="left:710px;top:82.2px;height:17.4px;line-height:17.4px;text-align:left;">m</div>
<div class="t" style="left:536.5px;top:103.1px;height:16px;line-height:16px;width:120px;text-align:right;letter-spacing:-0.25px;">Höhe</div>
<div style="left:659.5px;top:100.8px;width:48.3px;height:18.3px;background:#fff;border:1px solid #9a9a9a;box-sizing:border-box"></div>
<div class="t" style="left:659.5px;top:101.6px;height:18.3px;line-height:18.3px;width:42.5px;text-align:right;">2,80</div>
<div class="t" style="left:710px;top:102.4px;height:17.4px;line-height:17.4px;text-align:left;">m</div>
<div class="t" style="left:640px;top:62.7px;height:16px;line-height:16px;width:120px;text-align:right;letter-spacing:-0.25px;">NGF</div>
<div style="left:762.2px;top:61.2px;width:64.6px;height:17.4px;background:#fff;border:1px solid #9a9a9a;box-sizing:border-box"></div>
<div class="t" style="left:762.2px;top:62px;height:17.4px;line-height:17.4px;width:42.4px;text-align:right;">70,49</div>
<svg style="left:810.5px;top:63.2px" width="13.4" height="13.4" viewBox="0 0 13.4 13.4"><rect width="13.4" height="13.4" fill="#0c3c9c"/><path d="M2.4 11 L3.2 7.6 L8.6 2.2 L11.2 4.8 L5.8 10.2 Z" fill="#fff"/><path d="M8 3.6 L9.8 5.4" stroke="#0c3c9c" stroke-width="0.7"/><circle cx="2.3" cy="11.2" r="0.7" fill="#fff"/></svg>
<div class="t" style="left:829px;top:62px;height:17.4px;line-height:17.4px;text-align:left;">m²</div>
<div class="t" style="left:640px;top:82.9px;height:16px;line-height:16px;width:120px;text-align:right;letter-spacing:-0.25px;">Volumen</div>
<div style="left:762.2px;top:81.4px;width:64.6px;height:17.4px;background:#fff;border:1px solid #9a9a9a;box-sizing:border-box"></div>
<div class="t" style="left:762.2px;top:82.2px;height:17.4px;line-height:17.4px;width:42.4px;text-align:right;">197,37</div>
<svg style="left:810.5px;top:83.4px" width="13.4" height="13.4" viewBox="0 0 13.4 13.4"><rect width="13.4" height="13.4" fill="#0c3c9c"/><path d="M2.4 11 L3.2 7.6 L8.6 2.2 L11.2 4.8 L5.8 10.2 Z" fill="#fff"/><path d="M8 3.6 L9.8 5.4" stroke="#0c3c9c" stroke-width="0.7"/><circle cx="2.3" cy="11.2" r="0.7" fill="#fff"/></svg>
<div class="t" style="left:829px;top:82.2px;height:17.4px;line-height:17.4px;text-align:left;">m³</div>
<div style="left:192.4px;top:145.4px;width:1011px;height:410px;background:#fff;border:1px solid #d9d9d9;box-sizing:border-box"></div>
<div style="left:276.4px;top:129.7px;width:61.6px;height:16.1px;background:#f0f0f0;border:1px solid #d9d9d9;box-sizing:border-box"></div>
<div style="left:192.4px;top:127.9px;width:84.8px;height:18.4px;background:#fff;border:1px solid #d9d9d9;border-bottom:none;box-sizing:border-box"></div>
<div class="t" style="left:198.6px;top:130.2px;height:15.6px;line-height:15.6px;text-align:left;letter-spacing:-0.235px;">Hülle / Teilflächen</div>
<div class="t" style="left:279.6px;top:131.8px;height:15.2px;line-height:15.2px;text-align:left;letter-spacing:-0.334px;">Beschreibung</div>
<div style="left:196.5px;top:149.2px;width:1004px;height:20.6px;background:#aad430"></div>
<svg style="left:200.2px;top:153.6px" width="13.6" height="12.4" viewBox="0 0 13.6 12.4"><defs><linearGradient id="fg" x1="0" y1="0" x2="0" y2="1"><stop offset="0" stop-color="#e2e2e2"/><stop offset="0.5" stop-color="#e6e4dc"/><stop offset="0.62" stop-color="#fde9a0"/><stop offset="1" stop-color="#fde9a0"/></linearGradient></defs><rect x="0" y="5.2" width="13.6" height="7" fill="#e6c884"/><path d="M2.6 0.8 V8.8 H10.3 V0.8" fill="url(#fg)" stroke="#111" stroke-width="1.3"/><path d="M5.6 0.7 H7.4" stroke="#111" stroke-width="1.1"/></svg>
<svg style="left:221.8px;top:155.6px" width="12.6" height="10.4" viewBox="0 0 12.6 10.4"><path d="M6.3 0.2 L12.4 6.6 H0.2 Z" fill="#d42a2a"/><path d="M1.2 6.4 V10.2 M11.4 6.4 V10.2" stroke="#3a1a10" stroke-width="1.4"/><path d="M0.2 6.6 H12.4" stroke="#7a1a1a" stroke-width="0.9"/></svg>
<svg style="left:243.6px;top:155px" width="12.8" height="10.8" viewBox="0 0 12.8 10.8"><path d="M0.7 10.100000000000001 V3.8 L4.1 0.8 L7.8 3.4 H12.100000000000001 V10.100000000000001 Z" fill="#fff" stroke="#111" stroke-width="1.25" stroke-linejoin="miter"/></svg>
<svg style="left:264px;top:159px" width="6.6" height="4.2" viewBox="0 0 6.6 4.2"><path d="M0 0.2 H6.6 L3.3 4 Z" fill="#101850"/></svg>
<svg style="left:277.6px;top:154px" width="10.4" height="11.2" viewBox="0 0 10.4 11.2"><rect x="0.6" y="0.6" width="9.2" height="10" fill="#b8dcf4" stroke="#2a3a58" stroke-width="1.2"/><path d="M5.2 0.6 V10.6" stroke="#2a3a58" stroke-width="1.1"/><path d="M2.2 2 V9.2 M7.6 2 V9.2" stroke="#e8f4fc" stroke-width="0.9"/></svg>
<svg style="left:298.8px;top:153px" width="9.4" height="13" viewBox="0 0 9.4 13"><rect x="0.4" y="0.4" width="8.6" height="12.2" fill="#7a4a3a" stroke="#3a2a26" stroke-width="0.8"/><rect x="1.8" y="1.8" width="5.800000000000001" height="3.2" fill="#a8d4ee" stroke="#5a3a30" stroke-width="0.5"/><rect x="1.2" y="11.6" width="7.0" height="1" fill="#9a6a58"/></svg>
<svg style="left:319px;top:154px" width="12.2" height="11.6" viewBox="0 0 12.2 11.6"><rect x="0.5" y="0.5" width="11.2" height="10.6" rx="0.8" fill="#5a5a5e" stroke="#151515" stroke-width="1"/><rect x="2.8" y="1" width="6.2" height="3.4" fill="#8a8a8e" stroke="#151515" stroke-width="0.6"/><rect x="2.6" y="6.2" width="7" height="4.6" fill="#e8e8e8" stroke="#151515" stroke-width="0.6"/><rect x="4.4" y="7.4" width="2" height="2.6" fill="#444"/></svg>
<div style="left:338.1px;top:151px;width:1.1px;height:17.8px;background:#71892a"></div>
<div style="left:339.2px;top:151px;width:1px;height:17.8px;background:#c3e05c"></div>
<svg style="left:347.8px;top:153.4px" width="12.6" height="12.4" viewBox="0 0 12.6 12.4"><path d="M2.6 4.3 H8" stroke="#0a2fb0" stroke-width="1.6"/><path d="M3.2 1.9 L0.2 4.3 L3.2 6.7 Z" fill="#0a2fb0"/><rect x="8.6" y="3.5" width="1.7" height="1.7" fill="#d01020"/><path d="M0.4 9.7 H5.6" stroke="#d01020" stroke-width="1.7"/><circle cx="11.2" cy="1" r="0.95" fill="#111"/><circle cx="11.2" cy="7.6" r="0.95" fill="#111"/><circle cx="11.2" cy="11.1" r="0.95" fill="#111"/></svg>
<svg style="left:367.4px;top:154.4px" width="12.5" height="11.8" viewBox="0 0 12.5 11.8"><rect x="0.6" y="0.6" width="7" height="7" fill="#fff" stroke="#9898a4" stroke-width="1.1"/><rect x="5" y="4.2" width="6.9" height="6.9" fill="#fff" stroke="#a8a8ac" stroke-width="1.1"/></svg>
<div style="left:196.8px;top:169.8px;width:891.6px;height:17.2px;background:#e4e4e4"></div>
<div style="left:196.8px;top:186.2px;width:891.6px;height:0.8px;background:#d6d6d6"></div>
<div style="left:1088.3px;top:169.8px;width:1px;height:17.2px;background:#cdcdcd"></div>
<svg style="left:201px;top:175.1px" width="7" height="6.4" viewBox="0 0 7 6.4"><path d="M0 0 H7 L3.5 6.4 Z" fill="#0808b8"/></svg>
<div class="t" style="left:208.8px;top:170.1px;height:17.2px;line-height:17.2px;width:109.5px;text-align:center;letter-spacing:-0.25px;">Böden</div>
<div class="t" style="left:318.3px;top:170.1px;height:17.2px;line-height:17.2px;width:48.5px;text-align:center;">L_j</div>
<div style="left:317.8px;top:169.8px;width:1px;height:17.2px;background:#d3d3d3"></div>
<div style="left:318.8px;top:169.8px;width:0.8px;height:17.2px;background:#eaeaea"></div>
<div class="t" style="left:366.8px;top:170.1px;height:17.2px;line-height:17.2px;width:56.4px;text-align:center;">B_j</div>
<div style="left:366.3px;top:169.8px;width:1px;height:17.2px;background:#d3d3d3"></div>
<div style="left:367.3px;top:169.8px;width:0.8px;height:17.2px;background:#eaeaea"></div>
<div class="t" style="left:423.2px;top:170.1px;height:17.2px;line-height:17.2px;width:46.8px;text-align:center;">A_j</div>
<div style="left:422.7px;top:169.8px;width:1px;height:17.2px;background:#d3d3d3"></div>
<div style="left:423.7px;top:169.8px;width:0.8px;height:17.2px;background:#eaeaea"></div>
<div class="t" style="left:470px;top:170.1px;height:17.2px;line-height:17.2px;width:54.6px;text-align:center;">OL</div>
<div style="left:469.5px;top:169.8px;width:1px;height:17.2px;background:#d3d3d3"></div>
<div style="left:470.5px;top:169.8px;width:0.8px;height:17.2px;background:#eaeaea"></div>
<div class="t" style="left:524.6px;top:170.1px;height:17.2px;line-height:17.2px;width:46.2px;text-align:center;">OB</div>
<div style="left:524.1px;top:169.8px;width:1px;height:17.2px;background:#d3d3d3"></div>
<div style="left:525.1px;top:169.8px;width:0.8px;height:17.2px;background:#eaeaea"></div>
<div class="t" style="left:570.8px;top:170.1px;height:17.2px;line-height:17.2px;width:152.2px;text-align:center;letter-spacing:-0.25px;">Fläche (brutto)</div>
<div style="left:570.3px;top:169.8px;width:1px;height:17.2px;background:#d3d3d3"></div>
<div style="left:571.3px;top:169.8px;width:0.8px;height:17.2px;background:#eaeaea"></div>
<div class="t" style="left:723px;top:170.1px;height:17.2px;line-height:17.2px;width:116.4px;text-align:center;letter-spacing:-0.25px;">Konstruktion</div>
<div style="left:722.5px;top:169.8px;width:1px;height:17.2px;background:#d3d3d3"></div>
<div style="left:723.5px;top:169.8px;width:0.8px;height:17.2px;background:#eaeaea"></div>
<div class="t" style="left:839.4px;top:170.1px;height:17.2px;line-height:17.2px;width:88.8px;text-align:center;letter-spacing:-0.25px;">grenzt an</div>
<div style="left:838.9px;top:169.8px;width:1px;height:17.2px;background:#d3d3d3"></div>
<div style="left:839.9px;top:169.8px;width:0.8px;height:17.2px;background:#eaeaea"></div>
<div class="t" style="left:928.2px;top:170.1px;height:17.2px;line-height:17.2px;width:33px;text-align:center;letter-spacing:-0.25px;">LDL</div>
<div style="left:927.7px;top:169.8px;width:1px;height:17.2px;background:#d3d3d3"></div>
<div style="left:928.7px;top:169.8px;width:0.8px;height:17.2px;background:#eaeaea"></div>
<div class="t" style="left:961.2px;top:170.1px;height:17.2px;line-height:17.2px;width:127.2px;text-align:center;letter-spacing:-0.25px;">Bauteil</div>
<div style="left:960.7px;top:169.8px;width:1px;height:17.2px;background:#d3d3d3"></div>
<div style="left:961.7px;top:169.8px;width:0.8px;height:17.2px;background:#eaeaea"></div>
<div style="left:196.8px;top:187px;width:891.6px;height:16.8px;background:#ffffe4"></div>
<div style="left:1088px;top:187px;width:0.9px;height:16.8px;background:#efefef"></div>
<div class="t" style="left:197.5px;top:187.3px;height:17.78px;line-height:17.78px;text-align:left;letter-spacing:-0.25px;">FB Boden nach außen</div>
<div style="left:317.8px;top:187px;width:1px;height:16.8px;background:#efefda"></div>
<div class="t" style="left:318.3px;top:187.3px;height:17.78px;line-height:17.78px;width:46px;text-align:right;">0,00</div>
<div style="left:366.3px;top:187px;width:1px;height:16.8px;background:#efefda"></div>
<div class="t" style="left:366.8px;top:187.3px;height:17.78px;line-height:17.78px;width:53.9px;text-align:right;">0,00</div>
<div style="left:422.7px;top:187px;width:1px;height:16.8px;background:#efefda"></div>
<div class="t" style="left:423.2px;top:187.3px;height:17.78px;line-height:17.78px;width:44.3px;text-align:right;">0,00</div>
<div style="left:469.5px;top:187px;width:1px;height:16.8px;background:#efefda"></div>
<div class="t" style="left:470px;top:187.3px;height:17.78px;line-height:17.78px;width:52.1px;text-align:right;">0,36</div>
<div style="left:524.1px;top:187px;width:1px;height:16.8px;background:#efefda"></div>
<div class="t" style="left:524.6px;top:187.3px;height:17.78px;line-height:17.78px;width:43.7px;text-align:right;">0,36</div>
<div style="left:570.3px;top:187px;width:1px;height:16.8px;background:#efefda"></div>
<div class="t" style="left:570.8px;top:187.3px;height:17.78px;line-height:17.78px;width:149.7px;text-align:right;">82,22</div>
<div style="left:722.5px;top:187px;width:1px;height:16.8px;background:#efefda"></div>
<div class="t" style="left:724.4px;top:187.3px;height:17.78px;line-height:17.78px;text-align:left;letter-spacing:-0.25px;">Bodenplatte</div>
<div style="left:838.9px;top:187px;width:1px;height:16.8px;background:#efefda"></div>
<div class="t" style="left:840.8px;top:187.3px;height:17.78px;line-height:17.78px;text-align:left;letter-spacing:-0.25px;">Erdreich</div>
<div style="left:927.7px;top:187px;width:1px;height:16.8px;background:#efefda"></div>
<div style="left:939px;top:190.49px;width:9.8px;height:9.8px;background:#fff;border-style:solid;border-width:1.5px 1px 1px 1.5px;border-color:#6e6e6e #d4d4d4 #d4d4d4 #6e6e6e;box-sizing:border-box"></div>
<div style="left:960.7px;top:187px;width:1px;height:16.8px;background:#efefda"></div>
<div class="t" style="left:962.6px;top:187.3px;height:17.78px;line-height:17.78px;text-align:left;letter-spacing:-0.25px;">Boden</div>
<div style="left:196.8px;top:205.1px;width:1004px;height:1px;background:#c8c8c8"></div>
<div style="left:196.8px;top:206.1px;width:891.6px;height:17.5px;background:#e4e4e4"></div>
<div style="left:196.8px;top:222.8px;width:891.6px;height:0.8px;background:#d6d6d6"></div>
<div style="left:1088.3px;top:206.1px;width:1px;height:17.5px;background:#cdcdcd"></div>
<svg style="left:201px;top:211.55px" width="7" height="6.4" viewBox="0 0 7 6.4"><path d="M0 0 H7 L3.5 6.4 Z" fill="#0808b8"/></svg>
<div class="t" style="left:208.8px;top:206.4px;height:17.5px;line-height:17.5px;width:109.5px;text-align:center;letter-spacing:-0.25px;">Decken/Dächer</div>
<div class="t" style="left:318.3px;top:206.4px;height:17.5px;line-height:17.5px;width:48.5px;text-align:center;letter-spacing:-0.25px;">Richtung</div>
<div style="left:317.8px;top:206.1px;width:1px;height:17.5px;background:#d3d3d3"></div>
<div style="left:318.8px;top:206.1px;width:0.8px;height:17.5px;background:#eaeaea"></div>
<div class="t" style="left:366.8px;top:206.4px;height:17.5px;line-height:17.5px;width:56.4px;text-align:center;letter-spacing:-0.25px;">Neigung</div>
<div style="left:366.3px;top:206.1px;width:1px;height:17.5px;background:#d3d3d3"></div>
<div style="left:367.3px;top:206.1px;width:0.8px;height:17.5px;background:#eaeaea"></div>
<div class="t" style="left:423.2px;top:206.4px;height:17.5px;line-height:17.5px;width:46.8px;text-align:center;">L_j</div>
<div style="left:422.7px;top:206.1px;width:1px;height:17.5px;background:#d3d3d3"></div>
<div style="left:423.7px;top:206.1px;width:0.8px;height:17.5px;background:#eaeaea"></div>
<div class="t" style="left:470px;top:206.4px;height:17.5px;line-height:17.5px;width:54.6px;text-align:center;">B_j</div>
<div style="left:469.5px;top:206.1px;width:1px;height:17.5px;background:#d3d3d3"></div>
<div style="left:470.5px;top:206.1px;width:0.8px;height:17.5px;background:#eaeaea"></div>
<div class="t" style="left:524.6px;top:206.4px;height:17.5px;line-height:17.5px;width:46.6px;text-align:center;">A_j</div>
<div style="left:524.1px;top:206.1px;width:1px;height:17.5px;background:#d3d3d3"></div>
<div style="left:525.1px;top:206.1px;width:0.8px;height:17.5px;background:#eaeaea"></div>
<div class="t" style="left:571.2px;top:206.4px;height:17.5px;line-height:17.5px;width:41px;text-align:center;">OL</div>
<div style="left:570.7px;top:206.1px;width:1px;height:17.5px;background:#d3d3d3"></div>
<div style="left:571.7px;top:206.1px;width:0.8px;height:17.5px;background:#eaeaea"></div>
<div class="t" style="left:612.2px;top:206.4px;height:17.5px;line-height:17.5px;width:48.4px;text-align:center;">OB</div>
<div style="left:611.7px;top:206.1px;width:1px;height:17.5px;background:#d3d3d3"></div>
<div style="left:612.7px;top:206.1px;width:0.8px;height:17.5px;background:#eaeaea"></div>
<div class="t" style="left:660.6px;top:206.4px;height:17.5px;line-height:17.5px;width:62.4px;text-align:center;">A_br</div>
<div style="left:660.1px;top:206.1px;width:1px;height:17.5px;background:#d3d3d3"></div>
<div style="left:661.1px;top:206.1px;width:0.8px;height:17.5px;background:#eaeaea"></div>
<div class="t" style="left:723px;top:206.4px;height:17.5px;line-height:17.5px;width:116.4px;text-align:center;letter-spacing:-0.25px;">Konstruktion</div>
<div style="left:722.5px;top:206.1px;width:1px;height:17.5px;background:#d3d3d3"></div>
<div style="left:723.5px;top:206.1px;width:0.8px;height:17.5px;background:#eaeaea"></div>
<div class="t" style="left:839.4px;top:206.4px;height:17.5px;line-height:17.5px;width:88.8px;text-align:center;letter-spacing:-0.25px;">grenzt an</div>
<div style="left:838.9px;top:206.1px;width:1px;height:17.5px;background:#d3d3d3"></div>
<div style="left:839.9px;top:206.1px;width:0.8px;height:17.5px;background:#eaeaea"></div>
<div class="t" style="left:928.2px;top:206.4px;height:17.5px;line-height:17.5px;width:33px;text-align:center;letter-spacing:-0.25px;">LDL</div>
<div style="left:927.7px;top:206.1px;width:1px;height:17.5px;background:#d3d3d3"></div>
<div style="left:928.7px;top:206.1px;width:0.8px;height:17.5px;background:#eaeaea"></div>
<div class="t" style="left:961.2px;top:206.4px;height:17.5px;line-height:17.5px;width:127.2px;text-align:center;letter-spacing:-0.25px;">Bauteil</div>
<div style="left:960.7px;top:206.1px;width:1px;height:17.5px;background:#d3d3d3"></div>
<div style="left:961.7px;top:206.1px;width:0.8px;height:17.5px;background:#eaeaea"></div>
<div style="left:196.8px;top:223.6px;width:891.6px;height:17.83px;background:#ffffe4"></div>
<div style="left:1088px;top:223.6px;width:0.9px;height:17.83px;background:#efefef"></div>
<div class="t" style="left:197.5px;top:223.9px;height:17.78px;line-height:17.78px;text-align:left;letter-spacing:-0.420px;">DE Zwischendecke</div>
<div style="left:317.8px;top:223.6px;width:1px;height:17.83px;background:#efefda"></div>
<div style="left:366.3px;top:223.6px;width:1px;height:17.83px;background:#efefda"></div>
<div style="left:422.7px;top:223.6px;width:1px;height:17.83px;background:#efefda"></div>
<div class="t" style="left:423.2px;top:223.9px;height:17.78px;line-height:17.78px;width:44.3px;text-align:right;">0,00</div>
<div style="left:469.5px;top:223.6px;width:1px;height:17.83px;background:#efefda"></div>
<div class="t" style="left:470px;top:223.9px;height:17.78px;line-height:17.78px;width:52.1px;text-align:right;">0,00</div>
<div style="left:524.1px;top:223.6px;width:1px;height:17.83px;background:#efefda"></div>
<div class="t" style="left:524.6px;top:223.9px;height:17.78px;line-height:17.78px;width:44.1px;text-align:right;">0,00</div>
<div style="left:570.7px;top:223.6px;width:1px;height:17.83px;background:#efefda"></div>
<div class="t" style="left:571.2px;top:223.9px;height:17.78px;line-height:17.78px;width:38.5px;text-align:right;">0,36</div>
<div style="left:611.7px;top:223.6px;width:1px;height:17.83px;background:#efefda"></div>
<div class="t" style="left:612.2px;top:223.9px;height:17.78px;line-height:17.78px;width:45.9px;text-align:right;">0,36</div>
<div style="left:660.1px;top:223.6px;width:1px;height:17.83px;background:#efefda"></div>
<div class="t" style="left:660.6px;top:223.9px;height:17.78px;line-height:17.78px;width:59.9px;text-align:right;">18,90</div>
<div style="left:722.5px;top:223.6px;width:1px;height:17.83px;background:#efefda"></div>
<div class="t" style="left:724.4px;top:223.9px;height:17.78px;line-height:17.78px;text-align:left;letter-spacing:-0.420px;">Zwischendecke</div>
<div style="left:838.9px;top:223.6px;width:1px;height:17.83px;background:#efefda"></div>
<div class="t" style="left:840.8px;top:223.9px;height:17.78px;line-height:17.78px;text-align:left;letter-spacing:-0.25px;">Flur (5)</div>
<div style="left:927.7px;top:223.6px;width:1px;height:17.83px;background:#efefda"></div>
<div style="left:939px;top:227.09px;width:9.8px;height:9.8px;background:#fff;border-style:solid;border-width:1.5px 1px 1px 1.5px;border-color:#6e6e6e #d4d4d4 #d4d4d4 #6e6e6e;box-sizing:border-box"></div>
<svg style="left:940.6px;top:228.79px" width="7.4" height="7" viewBox="0 0 7.4 7"><path d="M0.8 3.2 L2.9 5.6 L6.8 0.8" fill="none" stroke="#000" stroke-width="1.5"/></svg>
<div style="left:960.7px;top:223.6px;width:1px;height:17.83px;background:#efefda"></div>
<div class="t" style="left:962.6px;top:223.9px;height:17.78px;line-height:17.78px;text-align:left;letter-spacing:-0.420px;">Zwischendecke</div>
<div style="left:196.8px;top:241.38px;width:891.6px;height:17.83px;background:#fff"></div>
<div style="left:1088px;top:241.38px;width:0.9px;height:17.83px;background:#efefef"></div>
<div class="t" style="left:197.5px;top:241.68px;height:17.78px;line-height:17.78px;text-align:left;letter-spacing:-0.420px;">DE Zwischendecke</div>
<div style="left:317.8px;top:241.38px;width:1px;height:17.83px;background:#eeeeee"></div>
<div style="left:366.3px;top:241.38px;width:1px;height:17.83px;background:#eeeeee"></div>
<div style="left:422.7px;top:241.38px;width:1px;height:17.83px;background:#eeeeee"></div>
<div class="t" style="left:423.2px;top:241.68px;height:17.78px;line-height:17.78px;width:44.3px;text-align:right;">0,00</div>
<div style="left:469.5px;top:241.38px;width:1px;height:17.83px;background:#eeeeee"></div>
<div class="t" style="left:470px;top:241.68px;height:17.78px;line-height:17.78px;width:52.1px;text-align:right;">0,00</div>
<div style="left:524.1px;top:241.38px;width:1px;height:17.83px;background:#eeeeee"></div>
<div class="t" style="left:524.6px;top:241.68px;height:17.78px;line-height:17.78px;width:44.1px;text-align:right;">0,00</div>
<div style="left:570.7px;top:241.38px;width:1px;height:17.83px;background:#eeeeee"></div>
<div class="t" style="left:571.2px;top:241.68px;height:17.78px;line-height:17.78px;width:38.5px;text-align:right;">0,36</div>
<div style="left:611.7px;top:241.38px;width:1px;height:17.83px;background:#eeeeee"></div>
<div class="t" style="left:612.2px;top:241.68px;height:17.78px;line-height:17.78px;width:45.9px;text-align:right;">0,36</div>
<div style="left:660.1px;top:241.38px;width:1px;height:17.83px;background:#eeeeee"></div>
<div class="t" style="left:660.6px;top:241.68px;height:17.78px;line-height:17.78px;width:59.9px;text-align:right;">2,97</div>
<div style="left:722.5px;top:241.38px;width:1px;height:17.83px;background:#eeeeee"></div>
<div class="t" style="left:724.4px;top:241.68px;height:17.78px;line-height:17.78px;text-align:left;letter-spacing:-0.420px;">Zwischendecke</div>
<div style="left:838.9px;top:241.38px;width:1px;height:17.83px;background:#eeeeee"></div>
<div class="t" style="left:840.8px;top:241.68px;height:17.78px;line-height:17.78px;text-align:left;letter-spacing:-0.25px;">Ankleide (7)</div>
<div style="left:927.7px;top:241.38px;width:1px;height:17.83px;background:#eeeeee"></div>
<div style="left:939px;top:244.87px;width:9.8px;height:9.8px;background:#fff;border-style:solid;border-width:1.5px 1px 1px 1.5px;border-color:#6e6e6e #d4d4d4 #d4d4d4 #6e6e6e;box-sizing:border-box"></div>
<div style="left:960.7px;top:241.38px;width:1px;height:17.83px;background:#eeeeee"></div>
<div class="t" style="left:962.6px;top:241.68px;height:17.78px;line-height:17.78px;text-align:left;letter-spacing:-0.420px;">Zwischendecke</div>
<div style="left:196.8px;top:259.16px;width:891.6px;height:17.83px;background:#ffffe4"></div>
<div style="left:1088px;top:259.16px;width:0.9px;height:17.83px;background:#efefef"></div>
<div class="t" style="left:197.5px;top:259.46px;height:17.78px;line-height:17.78px;text-align:left;letter-spacing:-0.420px;">DE Zwischendecke</div>
<div style="left:317.8px;top:259.16px;width:1px;height:17.83px;background:#efefda"></div>
<div style="left:366.3px;top:259.16px;width:1px;height:17.83px;background:#efefda"></div>
<div style="left:422.7px;top:259.16px;width:1px;height:17.83px;background:#efefda"></div>
<div class="t" style="left:423.2px;top:259.46px;height:17.78px;line-height:17.78px;width:44.3px;text-align:right;">0,00</div>
<div style="left:469.5px;top:259.16px;width:1px;height:17.83px;background:#efefda"></div>
<div class="t" style="left:470px;top:259.46px;height:17.78px;line-height:17.78px;width:52.1px;text-align:right;">0,00</div>
<div style="left:524.1px;top:259.16px;width:1px;height:17.83px;background:#efefda"></div>
<div class="t" style="left:524.6px;top:259.46px;height:17.78px;line-height:17.78px;width:44.1px;text-align:right;">0,00</div>
<div style="left:570.7px;top:259.16px;width:1px;height:17.83px;background:#efefda"></div>
<div class="t" style="left:571.2px;top:259.46px;height:17.78px;line-height:17.78px;width:38.5px;text-align:right;">0,36</div>
<div style="left:611.7px;top:259.16px;width:1px;height:17.83px;background:#efefda"></div>
<div class="t" style="left:612.2px;top:259.46px;height:17.78px;line-height:17.78px;width:45.9px;text-align:right;">0,36</div>
<div style="left:660.1px;top:259.16px;width:1px;height:17.83px;background:#efefda"></div>
<div class="t" style="left:660.6px;top:259.46px;height:17.78px;line-height:17.78px;width:59.9px;text-align:right;">15,94</div>
<div style="left:722.5px;top:259.16px;width:1px;height:17.83px;background:#efefda"></div>
<div class="t" style="left:724.4px;top:259.46px;height:17.78px;line-height:17.78px;text-align:left;letter-spacing:-0.420px;">Zwischendecke</div>
<div style="left:838.9px;top:259.16px;width:1px;height:17.83px;background:#efefda"></div>
<div class="t" style="left:840.8px;top:259.46px;height:17.78px;line-height:17.78px;text-align:left;letter-spacing:-0.25px;">Bad (9)</div>
<div style="left:927.7px;top:259.16px;width:1px;height:17.83px;background:#efefda"></div>
<div style="left:939px;top:262.65px;width:9.8px;height:9.8px;background:#fff;border-style:solid;border-width:1.5px 1px 1px 1.5px;border-color:#6e6e6e #d4d4d4 #d4d4d4 #6e6e6e;box-sizing:border-box"></div>
<div style="left:960.7px;top:259.16px;width:1px;height:17.83px;background:#efefda"></div>
<div class="t" style="left:962.6px;top:259.46px;height:17.78px;line-height:17.78px;text-align:left;letter-spacing:-0.420px;">Zwischendecke</div>
<div style="left:196.8px;top:276.94px;width:891.6px;height:17.83px;background:#fff"></div>
<div style="left:1088px;top:276.94px;width:0.9px;height:17.83px;background:#efefef"></div>
<div class="t" style="left:197.5px;top:277.24px;height:17.78px;line-height:17.78px;text-align:left;letter-spacing:-0.420px;">DE Zwischendecke</div>
<div style="left:317.8px;top:276.94px;width:1px;height:17.83px;background:#eeeeee"></div>
<div style="left:366.3px;top:276.94px;width:1px;height:17.83px;background:#eeeeee"></div>
<div style="left:422.7px;top:276.94px;width:1px;height:17.83px;background:#eeeeee"></div>
<div class="t" style="left:423.2px;top:277.24px;height:17.78px;line-height:17.78px;width:44.3px;text-align:right;">0,00</div>
<div style="left:469.5px;top:276.94px;width:1px;height:17.83px;background:#eeeeee"></div>
<div class="t" style="left:470px;top:277.24px;height:17.78px;line-height:17.78px;width:52.1px;text-align:right;">0,00</div>
<div style="left:524.1px;top:276.94px;width:1px;height:17.83px;background:#eeeeee"></div>
<div class="t" style="left:524.6px;top:277.24px;height:17.78px;line-height:17.78px;width:44.1px;text-align:right;">0,00</div>
<div style="left:570.7px;top:276.94px;width:1px;height:17.83px;background:#eeeeee"></div>
<div class="t" style="left:571.2px;top:277.24px;height:17.78px;line-height:17.78px;width:38.5px;text-align:right;">0,36</div>
<div style="left:611.7px;top:276.94px;width:1px;height:17.83px;background:#eeeeee"></div>
<div class="t" style="left:612.2px;top:277.24px;height:17.78px;line-height:17.78px;width:45.9px;text-align:right;">0,36</div>
<div style="left:660.1px;top:276.94px;width:1px;height:17.83px;background:#eeeeee"></div>
<div class="t" style="left:660.6px;top:277.24px;height:17.78px;line-height:17.78px;width:59.9px;text-align:right;">18,91</div>
<div style="left:722.5px;top:276.94px;width:1px;height:17.83px;background:#eeeeee"></div>
<div class="t" style="left:724.4px;top:277.24px;height:17.78px;line-height:17.78px;text-align:left;letter-spacing:-0.420px;">Zwischendecke</div>
<div style="left:838.9px;top:276.94px;width:1px;height:17.83px;background:#eeeeee"></div>
<div class="t" style="left:840.8px;top:277.24px;height:17.78px;line-height:17.78px;text-align:left;letter-spacing:-0.25px;">Zimmer (10)</div>
<div style="left:927.7px;top:276.94px;width:1px;height:17.83px;background:#eeeeee"></div>
<div style="left:939px;top:280.43px;width:9.8px;height:9.8px;background:#fff;border-style:solid;border-width:1.5px 1px 1px 1.5px;border-color:#6e6e6e #d4d4d4 #d4d4d4 #6e6e6e;box-sizing:border-box"></div>
<div style="left:960.7px;top:276.94px;width:1px;height:17.83px;background:#eeeeee"></div>
<div class="t" style="left:962.6px;top:277.24px;height:17.78px;line-height:17.78px;text-align:left;letter-spacing:-0.420px;">Zwischendecke</div>
<div style="left:196.8px;top:294.72px;width:891.6px;height:16.38px;background:#ffffe4"></div>
<div style="left:1088px;top:294.72px;width:0.9px;height:16.38px;background:#efefef"></div>
<div class="t" style="left:197.5px;top:295.02px;height:17.78px;line-height:17.78px;text-align:left;letter-spacing:-0.420px;">DE Zwischendecke</div>
<div style="left:317.8px;top:294.72px;width:1px;height:16.38px;background:#efefda"></div>
<div style="left:366.3px;top:294.72px;width:1px;height:16.38px;background:#efefda"></div>
<div style="left:422.7px;top:294.72px;width:1px;height:16.38px;background:#efefda"></div>
<div class="t" style="left:423.2px;top:295.02px;height:17.78px;line-height:17.78px;width:44.3px;text-align:right;">0,00</div>
<div style="left:469.5px;top:294.72px;width:1px;height:16.38px;background:#efefda"></div>
<div class="t" style="left:470px;top:295.02px;height:17.78px;line-height:17.78px;width:52.1px;text-align:right;">0,00</div>
<div style="left:524.1px;top:294.72px;width:1px;height:16.38px;background:#efefda"></div>
<div class="t" style="left:524.6px;top:295.02px;height:17.78px;line-height:17.78px;width:44.1px;text-align:right;">0,00</div>
<div style="left:570.7px;top:294.72px;width:1px;height:16.38px;background:#efefda"></div>
<div class="t" style="left:571.2px;top:295.02px;height:17.78px;line-height:17.78px;width:38.5px;text-align:right;">0,36</div>
<div style="left:611.7px;top:294.72px;width:1px;height:16.38px;background:#efefda"></div>
<div class="t" style="left:612.2px;top:295.02px;height:17.78px;line-height:17.78px;width:45.9px;text-align:right;">0,36</div>
<div style="left:660.1px;top:294.72px;width:1px;height:16.38px;background:#efefda"></div>
<div class="t" style="left:660.6px;top:295.02px;height:17.78px;line-height:17.78px;width:59.9px;text-align:right;">25,50</div>
<div style="left:722.5px;top:294.72px;width:1px;height:16.38px;background:#efefda"></div>
<div class="t" style="left:724.4px;top:295.02px;height:17.78px;line-height:17.78px;text-align:left;letter-spacing:-0.420px;">Zwischendecke</div>
<div style="left:838.9px;top:294.72px;width:1px;height:16.38px;background:#efefda"></div>
<div class="t" style="left:840.8px;top:295.02px;height:17.78px;line-height:17.78px;text-align:left;letter-spacing:-0.25px;">Zimmer (11)</div>
<div style="left:927.7px;top:294.72px;width:1px;height:16.38px;background:#efefda"></div>
<div style="left:939px;top:298.21px;width:9.8px;height:9.8px;background:#fff;border-style:solid;border-width:1.5px 1px 1px 1.5px;border-color:#6e6e6e #d4d4d4 #d4d4d4 #6e6e6e;box-sizing:border-box"></div>
<div style="left:960.7px;top:294.72px;width:1px;height:16.38px;background:#efefda"></div>
<div class="t" style="left:962.6px;top:295.02px;height:17.78px;line-height:17.78px;text-align:left;letter-spacing:-0.420px;">Zwischendecke</div>
<div style="left:196.8px;top:312.7px;width:1004px;height:1px;background:#c8c8c8"></div>
<div style="left:196.8px;top:313.7px;width:891.6px;height:17.2px;background:#e4e4e4"></div>
<div style="left:196.8px;top:330.1px;width:891.6px;height:0.8px;background:#d6d6d6"></div>
<div style="left:1088.3px;top:313.7px;width:1px;height:17.2px;background:#cdcdcd"></div>
<svg style="left:201px;top:319px" width="7" height="6.4" viewBox="0 0 7 6.4"><path d="M0 0 H7 L3.5 6.4 Z" fill="#0808b8"/></svg>
<div class="t" style="left:208.8px;top:314px;height:17.2px;line-height:17.2px;width:109.5px;text-align:center;letter-spacing:-0.25px;">Wände</div>
<div class="t" style="left:318.3px;top:314px;height:17.2px;line-height:17.2px;width:47.9px;text-align:center;letter-spacing:-0.25px;">Richtung</div>
<div style="left:317.8px;top:313.7px;width:1px;height:17.2px;background:#d3d3d3"></div>
<div style="left:318.8px;top:313.7px;width:0.8px;height:17.2px;background:#eaeaea"></div>
<div class="t" style="left:366.2px;top:314px;height:17.2px;line-height:17.2px;width:57px;text-align:center;">L_j</div>
<div style="left:365.7px;top:313.7px;width:1px;height:17.2px;background:#d3d3d3"></div>
<div style="left:366.7px;top:313.7px;width:0.8px;height:17.2px;background:#eaeaea"></div>
<div class="t" style="left:423.2px;top:314px;height:17.2px;line-height:17.2px;width:47.2px;text-align:center;">H_j</div>
<div style="left:422.7px;top:313.7px;width:1px;height:17.2px;background:#d3d3d3"></div>
<div style="left:423.7px;top:313.7px;width:0.8px;height:17.2px;background:#eaeaea"></div>
<div class="t" style="left:470.4px;top:314px;height:17.2px;line-height:17.2px;width:55.4px;text-align:center;">A_j</div>
<div style="left:469.9px;top:313.7px;width:1px;height:17.2px;background:#d3d3d3"></div>
<div style="left:470.9px;top:313.7px;width:0.8px;height:17.2px;background:#eaeaea"></div>
<div class="t" style="left:525.8px;top:314px;height:17.2px;line-height:17.2px;width:45.8px;text-align:center;">OL</div>
<div style="left:525.3px;top:313.7px;width:1px;height:17.2px;background:#d3d3d3"></div>
<div style="left:526.3px;top:313.7px;width:0.8px;height:17.2px;background:#eaeaea"></div>
<div class="t" style="left:571.6px;top:314px;height:17.2px;line-height:17.2px;width:41.2px;text-align:center;">OH</div>
<div style="left:571.1px;top:313.7px;width:1px;height:17.2px;background:#d3d3d3"></div>
<div style="left:572.1px;top:313.7px;width:0.8px;height:17.2px;background:#eaeaea"></div>
<div class="t" style="left:612.8px;top:314px;height:17.2px;line-height:17.2px;width:110.2px;text-align:center;letter-spacing:-0.25px;">Fläche (brutto)</div>
<div style="left:612.3px;top:313.7px;width:1px;height:17.2px;background:#d3d3d3"></div>
<div style="left:613.3px;top:313.7px;width:0.8px;height:17.2px;background:#eaeaea"></div>
<div class="t" style="left:723px;top:314px;height:17.2px;line-height:17.2px;width:116.4px;text-align:center;letter-spacing:-0.25px;">Konstruktion</div>
<div style="left:722.5px;top:313.7px;width:1px;height:17.2px;background:#d3d3d3"></div>
<div style="left:723.5px;top:313.7px;width:0.8px;height:17.2px;background:#eaeaea"></div>
<div class="t" style="left:839.4px;top:314px;height:17.2px;line-height:17.2px;width:88.8px;text-align:center;letter-spacing:-0.25px;">grenzt an</div>
<div style="left:838.9px;top:313.7px;width:1px;height:17.2px;background:#d3d3d3"></div>
<div style="left:839.9px;top:313.7px;width:0.8px;height:17.2px;background:#eaeaea"></div>
<div class="t" style="left:928.2px;top:314px;height:17.2px;line-height:17.2px;width:33px;text-align:center;letter-spacing:-0.25px;">LDL</div>
<div style="left:927.7px;top:313.7px;width:1px;height:17.2px;background:#d3d3d3"></div>
<div style="left:928.7px;top:313.7px;width:0.8px;height:17.2px;background:#eaeaea"></div>
<div class="t" style="left:961.2px;top:314px;height:17.2px;line-height:17.2px;width:127.2px;text-align:center;letter-spacing:-0.25px;">Bauteil</div>
<div style="left:960.7px;top:313.7px;width:1px;height:17.2px;background:#d3d3d3"></div>
<div style="left:961.7px;top:313.7px;width:0.8px;height:17.2px;background:#eaeaea"></div>
<div style="left:196.8px;top:330.9px;width:891.6px;height:17.83px;background:#ffffe4"></div>
<div style="left:1088px;top:330.9px;width:0.9px;height:17.83px;background:#efefef"></div>
<div class="t" style="left:197.5px;top:331.2px;height:17.78px;line-height:17.78px;text-align:left;letter-spacing:-0.25px;">AW 36,5 m. Deckenauflage…</div>
<div style="left:317.8px;top:330.9px;width:1px;height:17.83px;background:#efefda"></div>
<div class="t" style="left:318.3px;top:331.2px;height:17.78px;line-height:17.78px;width:45.4px;text-align:right;">S (180°)</div>
<div style="left:365.7px;top:330.9px;width:1px;height:17.83px;background:#efefda"></div>
<div class="t" style="left:366.2px;top:331.2px;height:17.78px;line-height:17.78px;width:54.5px;text-align:right;">0,00</div>
<div style="left:422.7px;top:330.9px;width:1px;height:17.83px;background:#efefda"></div>
<div class="t" style="left:423.2px;top:331.2px;height:17.78px;line-height:17.78px;width:44.7px;text-align:right;">0,00</div>
<div style="left:469.9px;top:330.9px;width:1px;height:17.83px;background:#efefda"></div>
<div class="t" style="left:470.4px;top:331.2px;height:17.78px;line-height:17.78px;width:52.9px;text-align:right;">0,00</div>
<div style="left:525.3px;top:330.9px;width:1px;height:17.83px;background:#efefda"></div>
<div class="t" style="left:525.8px;top:331.2px;height:17.78px;line-height:17.78px;width:43.3px;text-align:right;">0,36</div>
<div style="left:571.1px;top:330.9px;width:1px;height:17.83px;background:#efefda"></div>
<div class="t" style="left:571.6px;top:331.2px;height:17.78px;line-height:17.78px;width:38.7px;text-align:right;">0,24</div>
<div style="left:612.3px;top:330.9px;width:1px;height:17.83px;background:#efefda"></div>
<div class="t" style="left:612.8px;top:331.2px;height:17.78px;line-height:17.78px;width:107.7px;text-align:right;">35,53</div>
<div style="left:722.5px;top:330.9px;width:1px;height:17.83px;background:#efefda"></div>
<div class="t" style="left:724.4px;top:331.2px;height:17.78px;line-height:17.78px;text-align:left;letter-spacing:-0.25px;">Außenwand</div>
<div style="left:838.9px;top:330.9px;width:1px;height:17.83px;background:#efefda"></div>
<div class="t" style="left:840.8px;top:331.2px;height:17.78px;line-height:17.78px;text-align:left;letter-spacing:-0.25px;">Außenluft</div>
<div style="left:927.7px;top:330.9px;width:1px;height:17.83px;background:#efefda"></div>
<div style="left:939px;top:334.39px;width:9.8px;height:9.8px;background:#fff;border-style:solid;border-width:1.5px 1px 1px 1.5px;border-color:#6e6e6e #d4d4d4 #d4d4d4 #6e6e6e;box-sizing:border-box"></div>
<div style="left:960.7px;top:330.9px;width:1px;height:17.83px;background:#efefda"></div>
<div class="t" style="left:962.6px;top:331.2px;height:17.78px;line-height:17.78px;text-align:left;">AW  S</div>
<div style="left:196.8px;top:348.68px;width:891.6px;height:17.83px;background:#fff"></div>
<div style="left:1088px;top:348.68px;width:0.9px;height:17.83px;background:#efefef"></div>
<div class="t" style="left:197.5px;top:348.98px;height:17.78px;line-height:17.78px;text-align:left;letter-spacing:-0.25px;">AW 36,5 m. Deckenauflage…</div>
<div style="left:317.8px;top:348.68px;width:1px;height:17.83px;background:#eeeeee"></div>
<div class="t" style="left:318.3px;top:348.98px;height:17.78px;line-height:17.78px;width:45.4px;text-align:right;">O (90°)</div>
<div style="left:365.7px;top:348.68px;width:1px;height:17.83px;background:#eeeeee"></div>
<div class="t" style="left:366.2px;top:348.98px;height:17.78px;line-height:17.78px;width:54.5px;text-align:right;">0,00</div>
<div style="left:422.7px;top:348.68px;width:1px;height:17.83px;background:#eeeeee"></div>
<div class="t" style="left:423.2px;top:348.98px;height:17.78px;line-height:17.78px;width:44.7px;text-align:right;">0,00</div>
<div style="left:469.9px;top:348.68px;width:1px;height:17.83px;background:#eeeeee"></div>
<div class="t" style="left:470.4px;top:348.98px;height:17.78px;line-height:17.78px;width:52.9px;text-align:right;">0,00</div>
<div style="left:525.3px;top:348.68px;width:1px;height:17.83px;background:#eeeeee"></div>
<div class="t" style="left:525.8px;top:348.98px;height:17.78px;line-height:17.78px;width:43.3px;text-align:right;">0,36</div>
<div style="left:571.1px;top:348.68px;width:1px;height:17.83px;background:#eeeeee"></div>
<div class="t" style="left:571.6px;top:348.98px;height:17.78px;line-height:17.78px;width:38.7px;text-align:right;">0,24</div>
<div style="left:612.3px;top:348.68px;width:1px;height:17.83px;background:#eeeeee"></div>
<div class="t" style="left:612.8px;top:348.98px;height:17.78px;line-height:17.78px;width:107.7px;text-align:right;">25,73</div>
<div style="left:722.5px;top:348.68px;width:1px;height:17.83px;background:#eeeeee"></div>
<div class="t" style="left:724.4px;top:348.98px;height:17.78px;line-height:17.78px;text-align:left;letter-spacing:-0.25px;">Außenwand</div>
<div style="left:838.9px;top:348.68px;width:1px;height:17.83px;background:#eeeeee"></div>
<div class="t" style="left:840.8px;top:348.98px;height:17.78px;line-height:17.78px;text-align:left;letter-spacing:-0.25px;">Außenluft</div>
<div style="left:927.7px;top:348.68px;width:1px;height:17.83px;background:#eeeeee"></div>
<div style="left:939px;top:352.17px;width:9.8px;height:9.8px;background:#fff;border-style:solid;border-width:1.5px 1px 1px 1.5px;border-color:#6e6e6e #d4d4d4 #d4d4d4 #6e6e6e;box-sizing:border-box"></div>
<div style="left:960.7px;top:348.68px;width:1px;height:17.83px;background:#eeeeee"></div>
<div class="t" style="left:962.6px;top:348.98px;height:17.78px;line-height:17.78px;text-align:left;">AW  O</div>
<div style="left:196.8px;top:366.46px;width:891.6px;height:17.83px;background:#ffffe4"></div>
<div style="left:1088px;top:366.46px;width:0.9px;height:17.83px;background:#efefef"></div>
<div class="t" style="left:197.5px;top:366.76px;height:17.78px;line-height:17.78px;text-align:left;letter-spacing:-0.25px;">AW 36,5 m. Deckenauflage…</div>
<div style="left:317.8px;top:366.46px;width:1px;height:17.83px;background:#efefda"></div>
<div class="t" style="left:318.3px;top:366.76px;height:17.78px;line-height:17.78px;width:45.4px;text-align:right;">N (0°)</div>
<div style="left:365.7px;top:366.46px;width:1px;height:17.83px;background:#efefda"></div>
<div class="t" style="left:366.2px;top:366.76px;height:17.78px;line-height:17.78px;width:54.5px;text-align:right;">0,00</div>
<div style="left:422.7px;top:366.46px;width:1px;height:17.83px;background:#efefda"></div>
<div class="t" style="left:423.2px;top:366.76px;height:17.78px;line-height:17.78px;width:44.7px;text-align:right;">0,00</div>
<div style="left:469.9px;top:366.46px;width:1px;height:17.83px;background:#efefda"></div>
<div class="t" style="left:470.4px;top:366.76px;height:17.78px;line-height:17.78px;width:52.9px;text-align:right;">0,00</div>
<div style="left:525.3px;top:366.46px;width:1px;height:17.83px;background:#efefda"></div>
<div class="t" style="left:525.8px;top:366.76px;height:17.78px;line-height:17.78px;width:43.3px;text-align:right;">0,36</div>
<div style="left:571.1px;top:366.46px;width:1px;height:17.83px;background:#efefda"></div>
<div class="t" style="left:571.6px;top:366.76px;height:17.78px;line-height:17.78px;width:38.7px;text-align:right;">0,24</div>
<div style="left:612.3px;top:366.46px;width:1px;height:17.83px;background:#efefda"></div>
<div class="t" style="left:612.8px;top:366.76px;height:17.78px;line-height:17.78px;width:107.7px;text-align:right;">39,38</div>
<div style="left:722.5px;top:366.46px;width:1px;height:17.83px;background:#efefda"></div>
<div class="t" style="left:724.4px;top:366.76px;height:17.78px;line-height:17.78px;text-align:left;letter-spacing:-0.25px;">Außenwand</div>
<div style="left:838.9px;top:366.46px;width:1px;height:17.83px;background:#efefda"></div>
<div class="t" style="left:840.8px;top:366.76px;height:17.78px;line-height:17.78px;text-align:left;letter-spacing:-0.25px;">Außenluft</div>
<div style="left:927.7px;top:366.46px;width:1px;height:17.83px;background:#efefda"></div>
<div style="left:939px;top:369.95px;width:9.8px;height:9.8px;background:#fff;border-style:solid;border-width:1.5px 1px 1px 1.5px;border-color:#6e6e6e #d4d4d4 #d4d4d4 #6e6e6e;box-sizing:border-box"></div>
<div style="left:960.7px;top:366.46px;width:1px;height:17.83px;background:#efefda"></div>
<div class="t" style="left:962.6px;top:366.76px;height:17.78px;line-height:17.78px;text-align:left;">AW N</div>
<div style="left:196.8px;top:384.24px;width:891.6px;height:17.83px;background:#fff"></div>
<div style="left:1088px;top:384.24px;width:0.9px;height:17.83px;background:#efefef"></div>
<div class="t" style="left:197.5px;top:384.54px;height:17.78px;line-height:17.78px;text-align:left;letter-spacing:-0.25px;">IW m. Deckenauflager Pos …</div>
<div style="left:317.8px;top:384.24px;width:1px;height:17.83px;background:#eeeeee"></div>
<div class="t" style="left:318.3px;top:384.54px;height:17.78px;line-height:17.78px;width:45.4px;text-align:right;">W (270°)</div>
<div style="left:365.7px;top:384.24px;width:1px;height:17.83px;background:#eeeeee"></div>
<div class="t" style="left:366.2px;top:384.54px;height:17.78px;line-height:17.78px;width:54.5px;text-align:right;">0,00</div>
<div style="left:422.7px;top:384.24px;width:1px;height:17.83px;background:#eeeeee"></div>
<div class="t" style="left:423.2px;top:384.54px;height:17.78px;line-height:17.78px;width:44.7px;text-align:right;">0,00</div>
<div style="left:469.9px;top:384.24px;width:1px;height:17.83px;background:#eeeeee"></div>
<div class="t" style="left:470.4px;top:384.54px;height:17.78px;line-height:17.78px;width:52.9px;text-align:right;">0,00</div>
<div style="left:525.3px;top:384.24px;width:1px;height:17.83px;background:#eeeeee"></div>
<div class="t" style="left:525.8px;top:384.54px;height:17.78px;line-height:17.78px;width:43.3px;text-align:right;">0,36</div>
<div style="left:571.1px;top:384.24px;width:1px;height:17.83px;background:#eeeeee"></div>
<div class="t" style="left:571.6px;top:384.54px;height:17.78px;line-height:17.78px;width:38.7px;text-align:right;">0,24</div>
<div style="left:612.3px;top:384.24px;width:1px;height:17.83px;background:#eeeeee"></div>
<div class="t" style="left:612.8px;top:384.54px;height:17.78px;line-height:17.78px;width:107.7px;text-align:right;">9,40</div>
<div style="left:722.5px;top:384.24px;width:1px;height:17.83px;background:#eeeeee"></div>
<div class="t" style="left:724.4px;top:384.54px;height:17.78px;line-height:17.78px;text-align:left;letter-spacing:-0.25px;">Innenwand</div>
<div style="left:838.9px;top:384.24px;width:1px;height:17.83px;background:#eeeeee"></div>
<div class="t" style="left:840.8px;top:384.54px;height:17.78px;line-height:17.78px;text-align:left;letter-spacing:-0.25px;">HAR (3)</div>
<div style="left:927.7px;top:384.24px;width:1px;height:17.83px;background:#eeeeee"></div>
<div style="left:939px;top:387.73px;width:9.8px;height:9.8px;background:#fff;border-style:solid;border-width:1.5px 1px 1px 1.5px;border-color:#6e6e6e #d4d4d4 #d4d4d4 #6e6e6e;box-sizing:border-box"></div>
<div style="left:960.7px;top:384.24px;width:1px;height:17.83px;background:#eeeeee"></div>
<div class="t" style="left:962.6px;top:384.54px;height:17.78px;line-height:17.78px;text-align:left;letter-spacing:-0.25px;">Trennwände</div>
<div style="left:196.8px;top:402.02px;width:891.6px;height:17.18px;background:#ffffe4"></div>
<div style="left:1088px;top:402.02px;width:0.9px;height:17.18px;background:#efefef"></div>
<div class="t" style="left:197.5px;top:402.32px;height:17.78px;line-height:17.78px;text-align:left;letter-spacing:-0.25px;">IW m. Deckenauflager Pos …</div>
<div style="left:317.8px;top:402.02px;width:1px;height:17.18px;background:#efefda"></div>
<div class="t" style="left:318.3px;top:402.32px;height:17.78px;line-height:17.78px;width:45.4px;text-align:right;">W (270°)</div>
<div style="left:365.7px;top:402.02px;width:1px;height:17.18px;background:#efefda"></div>
<div class="t" style="left:366.2px;top:402.32px;height:17.78px;line-height:17.78px;width:54.5px;text-align:right;">0,00</div>
<div style="left:422.7px;top:402.02px;width:1px;height:17.18px;background:#efefda"></div>
<div class="t" style="left:423.2px;top:402.32px;height:17.78px;line-height:17.78px;width:44.7px;text-align:right;">0,00</div>
<div style="left:469.9px;top:402.02px;width:1px;height:17.18px;background:#efefda"></div>
<div class="t" style="left:470.4px;top:402.32px;height:17.78px;line-height:17.78px;width:52.9px;text-align:right;">0,00</div>
<div style="left:525.3px;top:402.02px;width:1px;height:17.18px;background:#efefda"></div>
<div class="t" style="left:525.8px;top:402.32px;height:17.78px;line-height:17.78px;width:43.3px;text-align:right;">0,36</div>
<div style="left:571.1px;top:402.02px;width:1px;height:17.18px;background:#efefda"></div>
<div class="t" style="left:571.6px;top:402.32px;height:17.78px;line-height:17.78px;width:38.7px;text-align:right;">0,24</div>
<div style="left:612.3px;top:402.02px;width:1px;height:17.18px;background:#efefda"></div>
<div class="t" style="left:612.8px;top:402.32px;height:17.78px;line-height:17.78px;width:107.7px;text-align:right;">11,19</div>
<div style="left:722.5px;top:402.02px;width:1px;height:17.18px;background:#efefda"></div>
<div class="t" style="left:724.4px;top:402.32px;height:17.78px;line-height:17.78px;text-align:left;letter-spacing:-0.25px;">Innenwand</div>
<div style="left:838.9px;top:402.02px;width:1px;height:17.18px;background:#efefda"></div>
<div class="t" style="left:840.8px;top:402.32px;height:17.78px;line-height:17.78px;text-align:left;letter-spacing:-0.152px;">Entree (4)</div>
<div style="left:927.7px;top:402.02px;width:1px;height:17.18px;background:#efefda"></div>
<div style="left:939px;top:405.51px;width:9.8px;height:9.8px;background:#fff;border-style:solid;border-width:1.5px 1px 1px 1.5px;border-color:#6e6e6e #d4d4d4 #d4d4d4 #6e6e6e;box-sizing:border-box"></div>
<svg style="left:940.6px;top:407.21px" width="7.4" height="7" viewBox="0 0 7.4 7"><path d="M0.8 3.2 L2.9 5.6 L6.8 0.8" fill="none" stroke="#000" stroke-width="1.5"/></svg>
<div style="left:960.7px;top:402.02px;width:1px;height:17.18px;background:#efefda"></div>
<div class="t" style="left:962.6px;top:402.32px;height:17.78px;line-height:17.78px;text-align:left;letter-spacing:-0.25px;">Trennwände</div>
<div style="left:196.8px;top:420.3px;width:1004px;height:1px;background:#c8c8c8"></div>
<div style="left:196.8px;top:421.3px;width:1006.2px;height:16.7px;background:#e4e4e4"></div>
<div style="left:196.8px;top:437.2px;width:1006.2px;height:0.8px;background:#d6d6d6"></div>
<div style="left:1202.9px;top:421.3px;width:1px;height:16.7px;background:#cdcdcd"></div>
<svg style="left:201px;top:426.35px" width="7" height="6.4" viewBox="0 0 7 6.4"><path d="M0 0 H7 L3.5 6.4 Z" fill="#0808b8"/></svg>
<div class="t" style="left:208.8px;top:421.6px;height:16.7px;line-height:16.7px;width:109.5px;text-align:center;letter-spacing:-0.25px;">Fenster/Ersatz</div>
<div class="t" style="left:318.3px;top:421.6px;height:16.7px;line-height:16.7px;width:47.9px;text-align:center;">B_j</div>
<div style="left:317.8px;top:421.3px;width:1px;height:16.7px;background:#d3d3d3"></div>
<div style="left:318.8px;top:421.3px;width:0.8px;height:16.7px;background:#eaeaea"></div>
<div class="t" style="left:366.2px;top:421.6px;height:16.7px;line-height:16.7px;width:57px;text-align:center;letter-spacing:-0.25px;">Höhe (netto)</div>
<div style="left:365.7px;top:421.3px;width:1px;height:16.7px;background:#d3d3d3"></div>
<div style="left:366.7px;top:421.3px;width:0.8px;height:16.7px;background:#eaeaea"></div>
<div class="t" style="left:423.2px;top:421.6px;height:16.7px;line-height:16.7px;width:47.8px;text-align:center;letter-spacing:-0.25px;">Brüstung</div>
<div style="left:422.7px;top:421.3px;width:1px;height:16.7px;background:#d3d3d3"></div>
<div style="left:423.7px;top:421.3px;width:0.8px;height:16.7px;background:#eaeaea"></div>
<div class="t" style="left:471px;top:421.6px;height:16.7px;line-height:16.7px;width:251.8px;text-align:center;letter-spacing:-0.25px;">Fläche (netto)</div>
<div style="left:470.5px;top:421.3px;width:1px;height:16.7px;background:#d3d3d3"></div>
<div style="left:471.5px;top:421.3px;width:0.8px;height:16.7px;background:#eaeaea"></div>
<div class="t" style="left:722.8px;top:421.6px;height:16.7px;line-height:16.7px;width:32.8px;text-align:center;letter-spacing:-0.25px;">Anzahl</div>
<div style="left:722.3px;top:421.3px;width:1px;height:16.7px;background:#d3d3d3"></div>
<div style="left:723.3px;top:421.3px;width:0.8px;height:16.7px;background:#eaeaea"></div>
<div class="t" style="left:755.6px;top:421.6px;height:16.7px;line-height:16.7px;width:153px;text-align:center;letter-spacing:-0.25px;">in Teilfläche</div>
<div style="left:755.1px;top:421.3px;width:1px;height:16.7px;background:#d3d3d3"></div>
<div style="left:756.1px;top:421.3px;width:0.8px;height:16.7px;background:#eaeaea"></div>
<div class="t" style="left:908.6px;top:421.6px;height:16.7px;line-height:16.7px;width:65.8px;text-align:center;letter-spacing:-0.25px;">Typ</div>
<div style="left:908.1px;top:421.3px;width:1px;height:16.7px;background:#d3d3d3"></div>
<div style="left:909.1px;top:421.3px;width:0.8px;height:16.7px;background:#eaeaea"></div>
<div class="t" style="left:974.4px;top:421.6px;height:16.7px;line-height:16.7px;width:79.2px;text-align:center;letter-spacing:-0.25px;">Konstruktion</div>
<div style="left:973.9px;top:421.3px;width:1px;height:16.7px;background:#d3d3d3"></div>
<div style="left:974.9px;top:421.3px;width:0.8px;height:16.7px;background:#eaeaea"></div>
<div class="t" style="left:1053.6px;top:421.6px;height:16.7px;line-height:16.7px;width:36.4px;text-align:center;letter-spacing:-0.25px;">LDL</div>
<div style="left:1053.1px;top:421.3px;width:1px;height:16.7px;background:#d3d3d3"></div>
<div style="left:1054.1px;top:421.3px;width:0.8px;height:16.7px;background:#eaeaea"></div>
<div class="t" style="left:1090px;top:421.6px;height:16.7px;line-height:16.7px;width:107px;text-align:center;letter-spacing:-0.25px;">Bauteil</div>
<div style="left:1089.5px;top:421.3px;width:1px;height:16.7px;background:#d3d3d3"></div>
<div style="left:1090.5px;top:421.3px;width:0.8px;height:16.7px;background:#eaeaea"></div>
<div style="left:196.8px;top:438px;width:1006.2px;height:17.83px;background:#ffffe4"></div>
<div style="left:1202.6px;top:438px;width:0.9px;height:17.83px;background:#efefef"></div>
<div class="t" style="left:197.5px;top:438.3px;height:17.78px;line-height:17.78px;text-align:left;letter-spacing:-0.25px;">AF RH Hebeschiebetür in A…</div>
<div style="left:317.8px;top:438px;width:1px;height:17.83px;background:#efefda"></div>
<div class="t" style="left:318.3px;top:438.3px;height:17.78px;line-height:17.78px;width:45.4px;text-align:right;">0,98</div>
<div style="left:365.7px;top:438px;width:1px;height:17.83px;background:#efefda"></div>
<div class="t" style="left:366.2px;top:438.3px;height:17.78px;line-height:17.78px;width:54.5px;text-align:right;">2,38</div>
<div style="left:422.7px;top:438px;width:1px;height:17.83px;background:#efefda"></div>
<div class="t" style="left:423.2px;top:438.3px;height:17.78px;line-height:17.78px;width:45.3px;text-align:right;">0,00</div>
<div style="left:470.5px;top:438px;width:1px;height:17.83px;background:#efefda"></div>
<div class="t" style="left:471px;top:438.3px;height:17.78px;line-height:17.78px;width:249.3px;text-align:right;">2,34</div>
<div style="left:722.3px;top:438px;width:1px;height:17.83px;background:#efefda"></div>
<div class="t" style="left:722.8px;top:438.3px;height:17.78px;line-height:17.78px;width:30.3px;text-align:right;">1</div>
<div style="left:755.1px;top:438px;width:1px;height:17.83px;background:#efefda"></div>
<div class="t" style="left:757px;top:438.3px;height:17.78px;line-height:17.78px;text-align:left;letter-spacing:-0.25px;">AW 36,5 m. Deckenauflager S Pos …</div>
<div style="left:908.1px;top:438px;width:1px;height:17.83px;background:#efefda"></div>
<div class="t" style="left:910px;top:438.3px;height:17.78px;line-height:17.78px;text-align:left;letter-spacing:-0.25px;">Fenster/Tür</div>
<div style="left:973.9px;top:438px;width:1px;height:17.83px;background:#efefda"></div>
<div class="t" style="left:975.8px;top:438.3px;height:17.78px;line-height:17.78px;text-align:left;letter-spacing:-0.25px;">Hebeschiebetür</div>
<div style="left:1053.1px;top:438px;width:1px;height:17.83px;background:#efefda"></div>
<div style="left:1066.7px;top:441.49px;width:9.8px;height:9.8px;background:#fff;border-style:solid;border-width:1.5px 1px 1px 1.5px;border-color:#6e6e6e #d4d4d4 #d4d4d4 #6e6e6e;box-sizing:border-box"></div>
<div style="left:1089.5px;top:438px;width:1px;height:17.83px;background:#efefda"></div>
<div class="t" style="left:1091.4px;top:438.3px;height:17.78px;line-height:17.78px;text-align:left;letter-spacing:-0.25px;">Hebeschiebetür in AW  S</div>
<div style="left:196.2px;top:437.8px;width:121.9px;height:17.98px;background:#fff;border:1px solid #e02020;box-sizing:border-box"></div>
<div style="left:197.4px;top:439px;width:119.5px;height:15.58px;border:1px dotted #444;box-sizing:border-box"></div>
<div class="t" style="left:197.5px;top:438.3px;height:17.78px;line-height:17.78px;text-align:left;letter-spacing:-0.25px;">AF RH Hebeschiebetür in A…</div>
<div style="left:196.8px;top:455.78px;width:1006.2px;height:17.83px;background:#fff"></div>
<div style="left:1202.6px;top:455.78px;width:0.9px;height:17.83px;background:#efefef"></div>
<div class="t" style="left:197.5px;top:456.08px;height:17.78px;line-height:17.78px;text-align:left;letter-spacing:-0.25px;">AF RH Hebeschiebetür in A…</div>
<div style="left:317.8px;top:455.78px;width:1px;height:17.83px;background:#eeeeee"></div>
<div class="t" style="left:318.3px;top:456.08px;height:17.78px;line-height:17.78px;width:45.4px;text-align:right;">2,01</div>
<div style="left:365.7px;top:455.78px;width:1px;height:17.83px;background:#eeeeee"></div>
<div class="t" style="left:366.2px;top:456.08px;height:17.78px;line-height:17.78px;width:54.5px;text-align:right;">2,38</div>
<div style="left:422.7px;top:455.78px;width:1px;height:17.83px;background:#eeeeee"></div>
<div class="t" style="left:423.2px;top:456.08px;height:17.78px;line-height:17.78px;width:45.3px;text-align:right;">0,00</div>
<div style="left:470.5px;top:455.78px;width:1px;height:17.83px;background:#eeeeee"></div>
<div class="t" style="left:471px;top:456.08px;height:17.78px;line-height:17.78px;width:249.3px;text-align:right;">4,79</div>
<div style="left:722.3px;top:455.78px;width:1px;height:17.83px;background:#eeeeee"></div>
<div class="t" style="left:722.8px;top:456.08px;height:17.78px;line-height:17.78px;width:30.3px;text-align:right;">1</div>
<div style="left:755.1px;top:455.78px;width:1px;height:17.83px;background:#eeeeee"></div>
<div class="t" style="left:757px;top:456.08px;height:17.78px;line-height:17.78px;text-align:left;letter-spacing:-0.25px;">AW 36,5 m. Deckenauflager S Pos …</div>
<div style="left:908.1px;top:455.78px;width:1px;height:17.83px;background:#eeeeee"></div>
<div class="t" style="left:910px;top:456.08px;height:17.78px;line-height:17.78px;text-align:left;letter-spacing:-0.25px;">Fenster/Tür</div>
<div style="left:973.9px;top:455.78px;width:1px;height:17.83px;background:#eeeeee"></div>
<div class="t" style="left:975.8px;top:456.08px;height:17.78px;line-height:17.78px;text-align:left;letter-spacing:-0.25px;">Hebeschiebetür</div>
<div style="left:1053.1px;top:455.78px;width:1px;height:17.83px;background:#eeeeee"></div>
<div style="left:1066.7px;top:459.27px;width:9.8px;height:9.8px;background:#fff;border-style:solid;border-width:1.5px 1px 1px 1.5px;border-color:#6e6e6e #d4d4d4 #d4d4d4 #6e6e6e;box-sizing:border-box"></div>
<div style="left:1089.5px;top:455.78px;width:1px;height:17.83px;background:#eeeeee"></div>
<div class="t" style="left:1091.4px;top:456.08px;height:17.78px;line-height:17.78px;text-align:left;letter-spacing:-0.25px;">Hebeschiebetür in AW  S</div>
<div style="left:196.8px;top:473.56px;width:1006.2px;height:17.83px;background:#ffffe4"></div>
<div style="left:1202.6px;top:473.56px;width:0.9px;height:17.83px;background:#efefef"></div>
<div class="t" style="left:197.5px;top:473.86px;height:17.78px;line-height:17.78px;text-align:left;letter-spacing:-0.25px;">AF RH Hebeschiebetür in A…</div>
<div style="left:317.8px;top:473.56px;width:1px;height:17.83px;background:#efefda"></div>
<div class="t" style="left:318.3px;top:473.86px;height:17.78px;line-height:17.78px;width:45.4px;text-align:right;">2,24</div>
<div style="left:365.7px;top:473.56px;width:1px;height:17.83px;background:#efefda"></div>
<div class="t" style="left:366.2px;top:473.86px;height:17.78px;line-height:17.78px;width:54.5px;text-align:right;">2,38</div>
<div style="left:422.7px;top:473.56px;width:1px;height:17.83px;background:#efefda"></div>
<div class="t" style="left:423.2px;top:473.86px;height:17.78px;line-height:17.78px;width:45.3px;text-align:right;">0,00</div>
<div style="left:470.5px;top:473.56px;width:1px;height:17.83px;background:#efefda"></div>
<div class="t" style="left:471px;top:473.86px;height:17.78px;line-height:17.78px;width:249.3px;text-align:right;">5,33</div>
<div style="left:722.3px;top:473.56px;width:1px;height:17.83px;background:#efefda"></div>
<div class="t" style="left:722.8px;top:473.86px;height:17.78px;line-height:17.78px;width:30.3px;text-align:right;">1</div>
<div style="left:755.1px;top:473.56px;width:1px;height:17.83px;background:#efefda"></div>
<div class="t" style="left:757px;top:473.86px;height:17.78px;line-height:17.78px;text-align:left;letter-spacing:-0.25px;">AW 36,5 m. Deckenauflager S Pos …</div>
<div style="left:908.1px;top:473.56px;width:1px;height:17.83px;background:#efefda"></div>
<div class="t" style="left:910px;top:473.86px;height:17.78px;line-height:17.78px;text-align:left;letter-spacing:-0.25px;">Fenster/Tür</div>
<div style="left:973.9px;top:473.56px;width:1px;height:17.83px;background:#efefda"></div>
<div class="t" style="left:975.8px;top:473.86px;height:17.78px;line-height:17.78px;text-align:left;letter-spacing:-0.25px;">Hebeschiebetür</div>
<div style="left:1053.1px;top:473.56px;width:1px;height:17.83px;background:#efefda"></div>
<div style="left:1066.7px;top:477.05px;width:9.8px;height:9.8px;background:#fff;border-style:solid;border-width:1.5px 1px 1px 1.5px;border-color:#6e6e6e #d4d4d4 #d4d4d4 #6e6e6e;box-sizing:border-box"></div>
<div style="left:1089.5px;top:473.56px;width:1px;height:17.83px;background:#efefda"></div>
<div class="t" style="left:1091.4px;top:473.86px;height:17.78px;line-height:17.78px;text-align:left;letter-spacing:-0.25px;">Hebeschiebetür in AW  S</div>
<div style="left:196.8px;top:491.34px;width:1006.2px;height:17.83px;background:#fff"></div>
<div style="left:1202.6px;top:491.34px;width:0.9px;height:17.83px;background:#efefef"></div>
<div class="t" style="left:197.5px;top:491.64px;height:17.78px;line-height:17.78px;text-align:left;letter-spacing:-0.25px;">AF RH Hebeschiebetür in A…</div>
<div style="left:317.8px;top:491.34px;width:1px;height:17.83px;background:#eeeeee"></div>
<div class="t" style="left:318.3px;top:491.64px;height:17.78px;line-height:17.78px;width:45.4px;text-align:right;">3,50</div>
<div style="left:365.7px;top:491.34px;width:1px;height:17.83px;background:#eeeeee"></div>
<div class="t" style="left:366.2px;top:491.64px;height:17.78px;line-height:17.78px;width:54.5px;text-align:right;">2,38</div>
<div style="left:422.7px;top:491.34px;width:1px;height:17.83px;background:#eeeeee"></div>
<div class="t" style="left:423.2px;top:491.64px;height:17.78px;line-height:17.78px;width:45.3px;text-align:right;">0,00</div>
<div style="left:470.5px;top:491.34px;width:1px;height:17.83px;background:#eeeeee"></div>
<div class="t" style="left:471px;top:491.64px;height:17.78px;line-height:17.78px;width:249.3px;text-align:right;">8,35</div>
<div style="left:722.3px;top:491.34px;width:1px;height:17.83px;background:#eeeeee"></div>
<div class="t" style="left:722.8px;top:491.64px;height:17.78px;line-height:17.78px;width:30.3px;text-align:right;">1</div>
<div style="left:755.1px;top:491.34px;width:1px;height:17.83px;background:#eeeeee"></div>
<div class="t" style="left:757px;top:491.64px;height:17.78px;line-height:17.78px;text-align:left;letter-spacing:-0.25px;">AW 36,5 m. Deckenauflager S Pos …</div>
<div style="left:908.1px;top:491.34px;width:1px;height:17.83px;background:#eeeeee"></div>
<div class="t" style="left:910px;top:491.64px;height:17.78px;line-height:17.78px;text-align:left;letter-spacing:-0.25px;">Fenster/Tür</div>
<div style="left:973.9px;top:491.34px;width:1px;height:17.83px;background:#eeeeee"></div>
<div class="t" style="left:975.8px;top:491.64px;height:17.78px;line-height:17.78px;text-align:left;letter-spacing:-0.25px;">Hebeschiebetür</div>
<div style="left:1053.1px;top:491.34px;width:1px;height:17.83px;background:#eeeeee"></div>
<div style="left:1066.7px;top:494.83px;width:9.8px;height:9.8px;background:#fff;border-style:solid;border-width:1.5px 1px 1px 1.5px;border-color:#6e6e6e #d4d4d4 #d4d4d4 #6e6e6e;box-sizing:border-box"></div>
<div style="left:1089.5px;top:491.34px;width:1px;height:17.83px;background:#eeeeee"></div>
<div class="t" style="left:1091.4px;top:491.64px;height:17.78px;line-height:17.78px;text-align:left;letter-spacing:-0.25px;">Hebeschiebetür in AW  S</div>
<div style="left:196.8px;top:509.12px;width:1006.2px;height:17.83px;background:#ffffe4"></div>
<div style="left:1202.6px;top:509.12px;width:0.9px;height:17.83px;background:#efefef"></div>
<div class="t" style="left:197.5px;top:509.42px;height:17.78px;line-height:17.78px;text-align:left;letter-spacing:-0.25px;">AF 1flg. in AW 36,5 m. Dec…</div>
<div style="left:317.8px;top:509.12px;width:1px;height:17.83px;background:#efefda"></div>
<div class="t" style="left:318.3px;top:509.42px;height:17.78px;line-height:17.78px;width:45.4px;text-align:right;">0,80</div>
<div style="left:365.7px;top:509.12px;width:1px;height:17.83px;background:#efefda"></div>
<div class="t" style="left:366.2px;top:509.42px;height:17.78px;line-height:17.78px;width:54.5px;text-align:right;">2,38</div>
<div style="left:422.7px;top:509.12px;width:1px;height:17.83px;background:#efefda"></div>
<div class="t" style="left:423.2px;top:509.42px;height:17.78px;line-height:17.78px;width:45.3px;text-align:right;">0,00</div>
<div style="left:470.5px;top:509.12px;width:1px;height:17.83px;background:#efefda"></div>
<div class="t" style="left:471px;top:509.42px;height:17.78px;line-height:17.78px;width:249.3px;text-align:right;">1,91</div>
<div style="left:722.3px;top:509.12px;width:1px;height:17.83px;background:#efefda"></div>
<div class="t" style="left:722.8px;top:509.42px;height:17.78px;line-height:17.78px;width:30.3px;text-align:right;">1</div>
<div style="left:755.1px;top:509.12px;width:1px;height:17.83px;background:#efefda"></div>
<div class="t" style="left:757px;top:509.42px;height:17.78px;line-height:17.78px;text-align:left;letter-spacing:-0.25px;">AW 36,5 m. Deckenauflager O Pos …</div>
<div style="left:908.1px;top:509.12px;width:1px;height:17.83px;background:#efefda"></div>
<div class="t" style="left:910px;top:509.42px;height:17.78px;line-height:17.78px;text-align:left;letter-spacing:-0.25px;">Fenster/Tür</div>
<div style="left:973.9px;top:509.12px;width:1px;height:17.83px;background:#efefda"></div>
<div class="t" style="left:975.8px;top:509.42px;height:17.78px;line-height:17.78px;text-align:left;letter-spacing:-0.25px;">Fenster</div>
<div style="left:1053.1px;top:509.12px;width:1px;height:17.83px;background:#efefda"></div>
<div style="left:1066.7px;top:512.61px;width:9.8px;height:9.8px;background:#fff;border-style:solid;border-width:1.5px 1px 1px 1.5px;border-color:#6e6e6e #d4d4d4 #d4d4d4 #6e6e6e;box-sizing:border-box"></div>
<div style="left:1089.5px;top:509.12px;width:1px;height:17.83px;background:#efefda"></div>
<div class="t" style="left:1091.4px;top:509.42px;height:17.78px;line-height:17.78px;text-align:left;">F in AW O</div>
<div style="left:196.8px;top:526.9px;width:1006.2px;height:17.83px;background:#fff"></div>
<div style="left:1202.6px;top:526.9px;width:0.9px;height:17.83px;background:#efefef"></div>
<div class="t" style="left:197.5px;top:527.2px;height:17.78px;line-height:17.78px;text-align:left;letter-spacing:-0.25px;">AF 1flg. in AW 36,5 m. Dec…</div>
<div style="left:317.8px;top:526.9px;width:1px;height:17.83px;background:#eeeeee"></div>
<div class="t" style="left:318.3px;top:527.2px;height:17.78px;line-height:17.78px;width:45.4px;text-align:right;">1,95</div>
<div style="left:365.7px;top:526.9px;width:1px;height:17.83px;background:#eeeeee"></div>
<div class="t" style="left:366.2px;top:527.2px;height:17.78px;line-height:17.78px;width:54.5px;text-align:right;">2,38</div>
<div style="left:422.7px;top:526.9px;width:1px;height:17.83px;background:#eeeeee"></div>
<div class="t" style="left:423.2px;top:527.2px;height:17.78px;line-height:17.78px;width:45.3px;text-align:right;">0,00</div>
<div style="left:470.5px;top:526.9px;width:1px;height:17.83px;background:#eeeeee"></div>
<div class="t" style="left:471px;top:527.2px;height:17.78px;line-height:17.78px;width:249.3px;text-align:right;">4,65</div>
<div style="left:722.3px;top:526.9px;width:1px;height:17.83px;background:#eeeeee"></div>
<div class="t" style="left:722.8px;top:527.2px;height:17.78px;line-height:17.78px;width:30.3px;text-align:right;">1</div>
<div style="left:755.1px;top:526.9px;width:1px;height:17.83px;background:#eeeeee"></div>
<div class="t" style="left:757px;top:527.2px;height:17.78px;line-height:17.78px;text-align:left;letter-spacing:-0.25px;">AW 36,5 m. Deckenauflager N Pos …</div>
<div style="left:908.1px;top:526.9px;width:1px;height:17.83px;background:#eeeeee"></div>
<div class="t" style="left:910px;top:527.2px;height:17.78px;line-height:17.78px;text-align:left;letter-spacing:-0.25px;">Fenster/Tür</div>
<div style="left:973.9px;top:526.9px;width:1px;height:17.83px;background:#eeeeee"></div>
<div class="t" style="left:975.8px;top:527.2px;height:17.78px;line-height:17.78px;text-align:left;letter-spacing:-0.25px;">Fenster</div>
<div style="left:1053.1px;top:526.9px;width:1px;height:17.83px;background:#eeeeee"></div>
<div style="left:1066.7px;top:530.39px;width:9.8px;height:9.8px;background:#fff;border-style:solid;border-width:1.5px 1px 1px 1.5px;border-color:#6e6e6e #d4d4d4 #d4d4d4 #6e6e6e;box-sizing:border-box"></div>
<div style="left:1089.5px;top:526.9px;width:1px;height:17.83px;background:#eeeeee"></div>
<div class="t" style="left:1091.4px;top:527.2px;height:17.78px;line-height:17.78px;text-align:left;">F in AW N</div>
<div style="left:196.3px;top:169.8px;width:0.9px;height:376px;background:#c6c6c6"></div>
<div style="left:196.1px;top:544.6px;width:1004px;height:1px;background:#c6c6c6"></div>
<div style="left:197px;top:545.6px;width:1004px;height:4px;background:#ececec"></div>
<svg style="left:328.4px;top:366.8px" width="11.4" height="17.6" viewBox="0 0 11.4 17.6"><path d="M0.7 0.9 V14.3 L3.9 11.3 L6.1 16.5 L8.3 15.6 L6.1 10.6 H10.4 Z" fill="#fff" stroke="#111" stroke-width="1" stroke-linejoin="miter"/></svg>
</body></html>
